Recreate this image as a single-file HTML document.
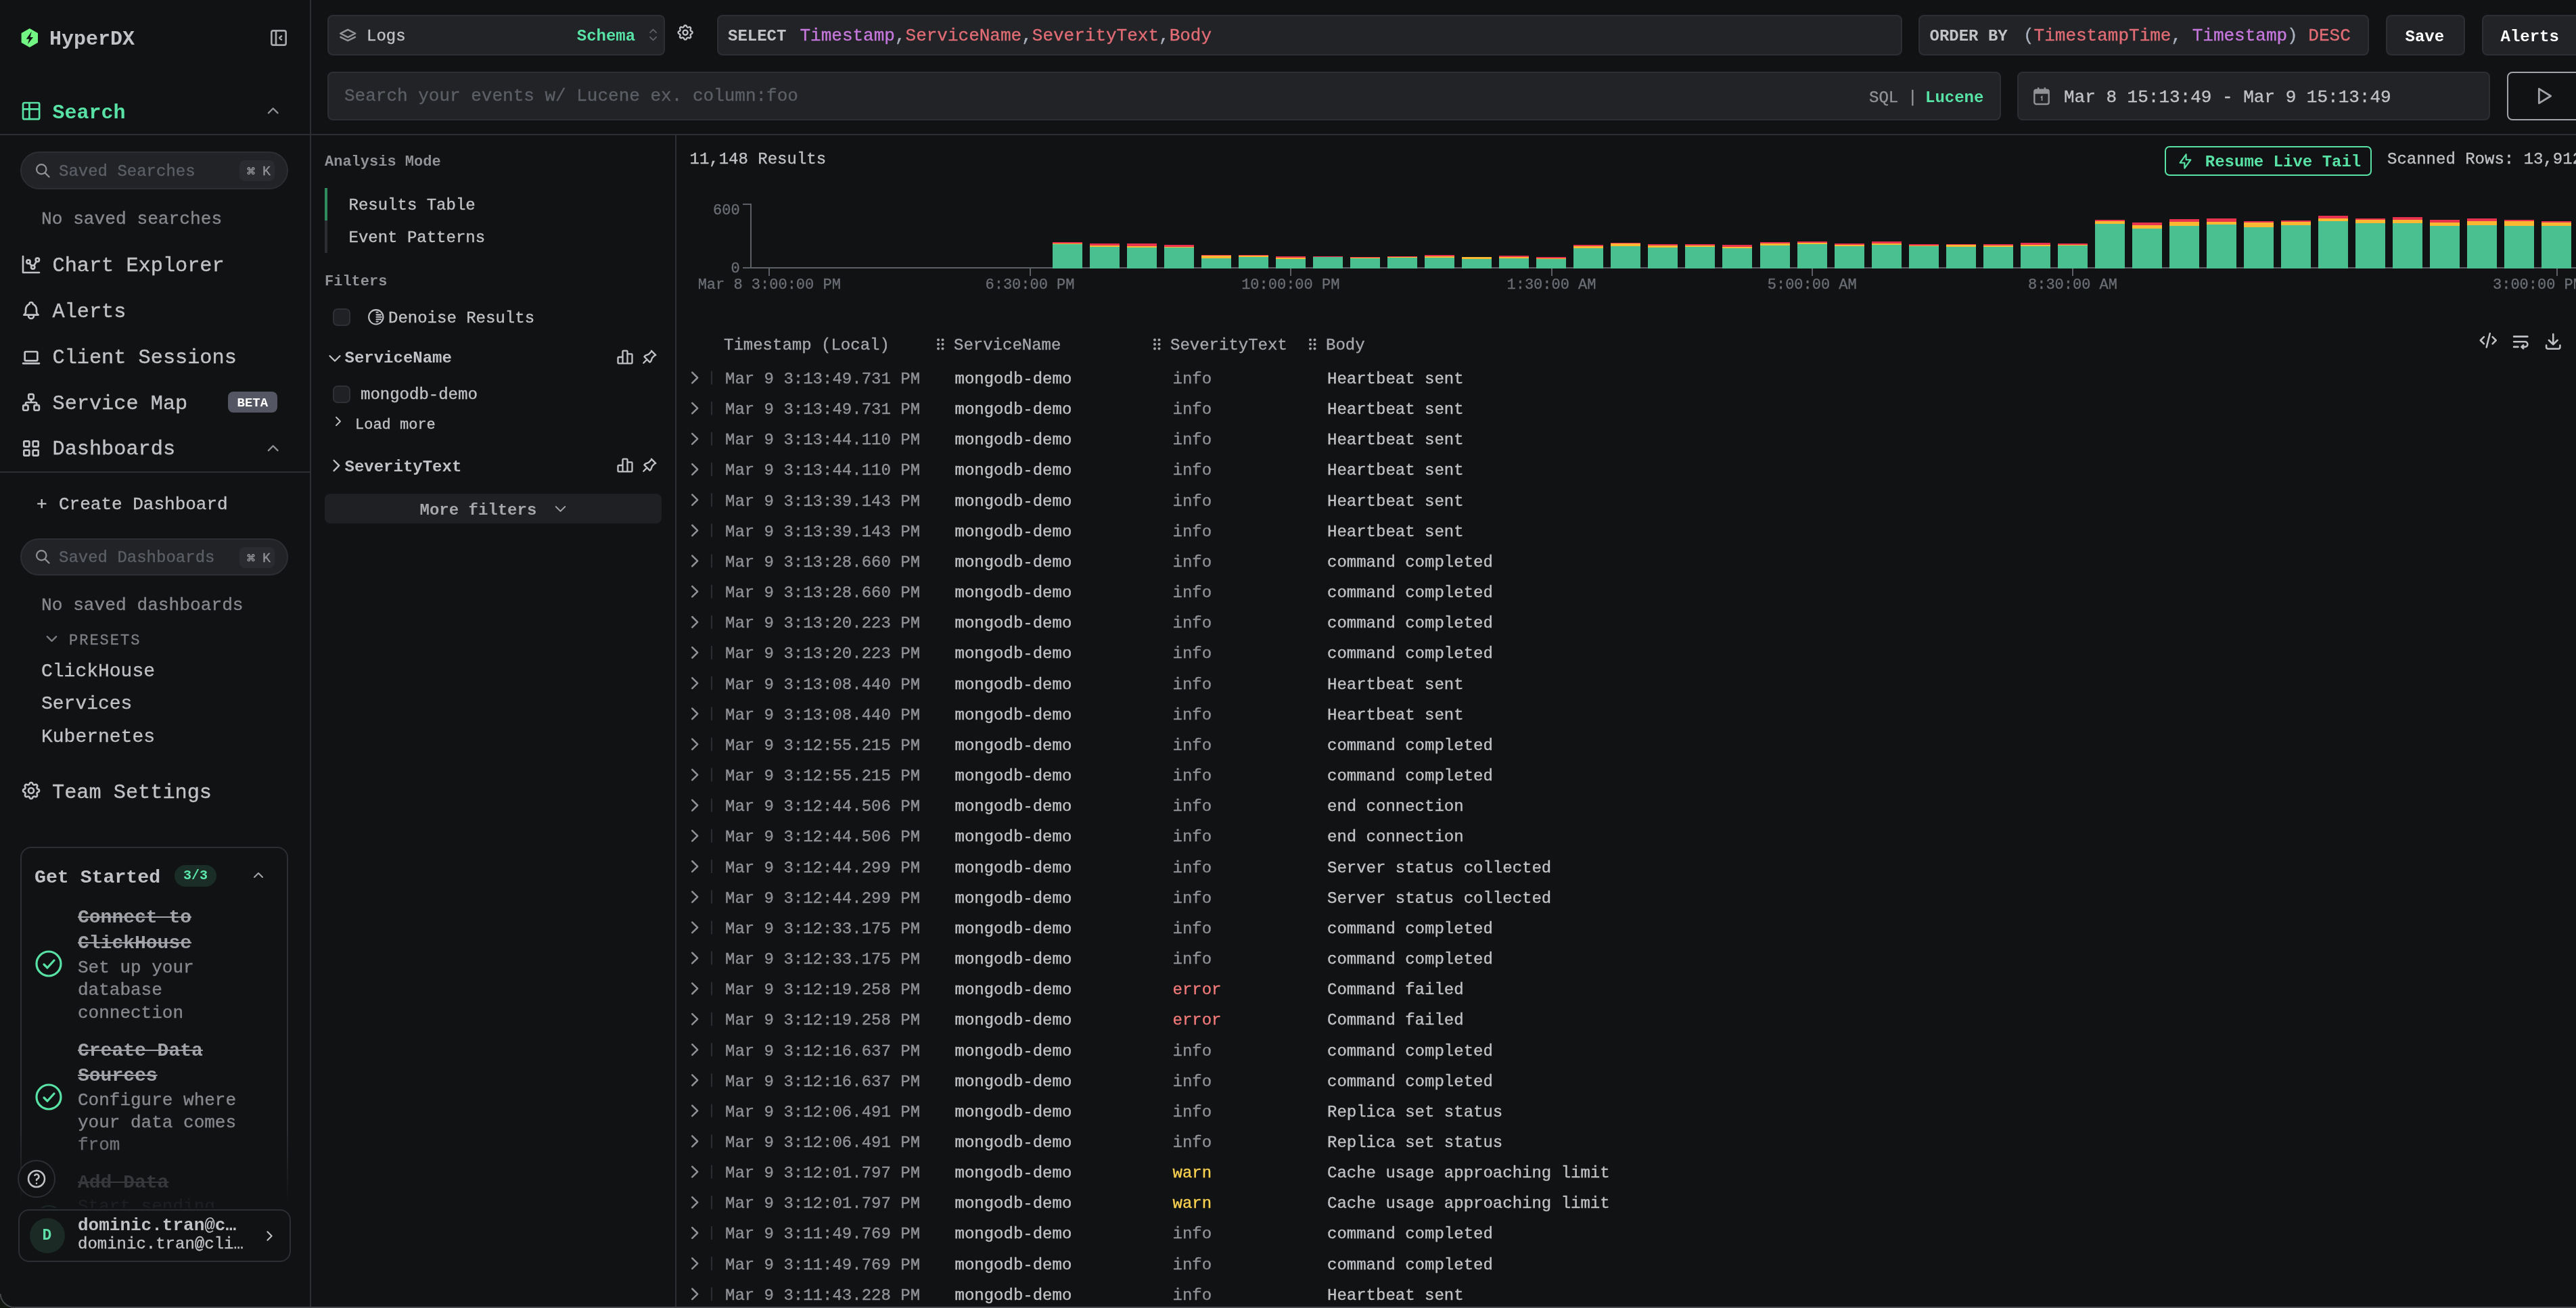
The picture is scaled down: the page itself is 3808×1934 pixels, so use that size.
<!DOCTYPE html><html><head><meta charset="utf-8"><title>HyperDX Search</title><style>
html,body{margin:0;padding:0;background:#111214;width:3808px;height:1934px;overflow:hidden;}
body{position:relative;}
#root{position:absolute;left:0;top:0;width:3808px;height:1934px;will-change:transform;}
.t{position:absolute;white-space:pre;}
.r{position:absolute;}
.i{position:absolute;overflow:visible;}
</style></head><body><div id="root"><div class="r" style="left:0.00px;top:0.00px;width:458.00px;height:1934.00px;background:#111214;border-radius:0px;box-sizing:border-box;"></div>
<div class="r" style="left:458.00px;top:0.00px;width:2.00px;height:1934.00px;background:#2c2e33;border-radius:0px;box-sizing:border-box;"></div>
<div class="r" style="left:0.00px;top:198.00px;width:458.00px;height:2.00px;background:#2c2e33;border-radius:0px;box-sizing:border-box;"></div>
<div class="r" style="left:0.00px;top:697.00px;width:458.00px;height:2.00px;background:#2c2e33;border-radius:0px;box-sizing:border-box;"></div>
<svg class="i" style="left:0px;top:0px" width="100" height="100" viewBox="0 0 100 100"><path d="M43.8 42 L56 49 L56 63 L43.8 70 L31.6 63 L31.6 49 Z" fill="#72f582"/><path d="M46.8 46.6 L38.8 57.8 L43.2 57.8 L41 65.2 L49 55 L44.6 55 Z" fill="#111214"/></svg>
<div class="t" style="left:73.00px;top:43.42px;font-size:30px;line-height:30px;color:#c1c2c5;font-weight:700;font-family:'Liberation Mono', monospace;">HyperDX</div>
<svg class="i" style="left:396.00px;top:40.00px" width="32.00" height="32.00" viewBox="0 0 24 24" fill="none" stroke="#a6a7ab" stroke-width="2" stroke-linecap="round" stroke-linejoin="round"><path d="M4 6a2 2 0 0 1 2 -2h12a2 2 0 0 1 2 2v12a2 2 0 0 1 -2 2h-12a2 2 0 0 1 -2 -2z M9 4v16 M15 10l-2 2l2 2"/></svg>
<svg class="i" style="left:29.90px;top:147.90px" width="32.20" height="32.20" viewBox="0 0 24 24" fill="none" stroke="#58e2a5" stroke-width="2" stroke-linecap="round" stroke-linejoin="round"><path d="M3 4.5a1.5 1.5 0 0 1 1.5 -1.5h15a1.5 1.5 0 0 1 1.5 1.5v15a1.5 1.5 0 0 1 -1.5 1.5h-15a1.5 1.5 0 0 1 -1.5 -1.5z M3 10h18 M10 3v18"/></svg>
<div class="t" style="left:77.50px;top:151.52px;font-size:30px;line-height:30px;color:#58e2a5;font-weight:700;font-family:'Liberation Mono', monospace;">Search</div>
<svg class="i" style="left:390.30px;top:150.30px" width="27.40" height="27.40" viewBox="0 0 24 24" fill="none" stroke="#909296" stroke-width="2" stroke-linecap="round" stroke-linejoin="round"><path d="M6 15l6 -6l6 6"/></svg>
<div class="r" style="left:30.00px;top:224.00px;width:396.00px;height:56.00px;background:#222327;border:2px solid #2c2e33;border-radius:28px;box-sizing:border-box;"></div>
<svg class="i" style="left:51.45px;top:239.55px" width="24.60" height="24.60" viewBox="0 0 24 24" fill="none" stroke="#909296" stroke-width="2.2" stroke-linecap="round" stroke-linejoin="round"><path d="M3 10a7 7 0 1 0 14 0a7 7 0 1 0 -14 0 M21 21l-6 -6"/></svg>
<div class="t" style="left:87.00px;top:241.61px;font-size:24px;line-height:24px;color:#5c5f66;font-weight:400;font-family:'Liberation Mono', monospace;-webkit-text-stroke:0.35px;">Saved Searches</div>
<div class="r" style="left:354.00px;top:237.00px;width:52.00px;height:31.00px;background:#2a2b30;border-radius:8px;box-sizing:border-box;"></div>
<div class="t" style="left:364.00px;top:245.65px;font-size:14px;line-height:14px;color:#909296;font-weight:700;font-family:'Liberation Sans', sans-serif;">⌘</div>
<div class="t" style="left:388.00px;top:244.18px;font-size:20px;line-height:20px;color:#909296;font-weight:400;font-family:'Liberation Mono', monospace;-webkit-text-stroke:0.35px;">K</div>
<div class="t" style="left:61.00px;top:311.23px;font-size:26.2px;line-height:26.2px;color:#86888e;font-weight:400;font-family:'Liberation Mono', monospace;-webkit-text-stroke:0.35px;">No saved searches</div>
<div class="t" style="left:77.50px;top:378.23px;font-size:30.25px;line-height:30.25px;color:#c1c2c5;font-weight:400;font-family:'Liberation Mono', monospace;-webkit-text-stroke:0.35px;">Chart Explorer</div>
<svg class="i" style="left:30.00px;top:375.00px" width="32.00" height="32.00" viewBox="0 0 24 24" fill="none" stroke="#c1c2c5" stroke-width="2" stroke-linecap="round" stroke-linejoin="round"><path d="M3 3v18h18 M7 9a2 2 0 1 0 4 0a2 2 0 1 0 -4 0 M17 7a2 2 0 1 0 4 0a2 2 0 1 0 -4 0 M12 15a2 2 0 1 0 4 0a2 2 0 1 0 -4 0 M10.16 10.62l2.34 2.88 M15.088 13.328l2.837 -4.586"/></svg>
<div class="t" style="left:77.50px;top:445.83px;font-size:30.25px;line-height:30.25px;color:#c1c2c5;font-weight:400;font-family:'Liberation Mono', monospace;-webkit-text-stroke:0.35px;">Alerts</div>
<svg class="i" style="left:30.00px;top:443.20px" width="32.00" height="32.00" viewBox="0 0 24 24" fill="none" stroke="#c1c2c5" stroke-width="2" stroke-linecap="round" stroke-linejoin="round"><path d="M10 5a2 2 0 1 1 4 0a7 7 0 0 1 4 6v3a4 4 0 0 0 2 3h-16a4 4 0 0 0 2 -3v-3a7 7 0 0 1 4 -6 M9 17v1a3 3 0 0 0 6 0v-1"/></svg>
<div class="t" style="left:77.50px;top:513.63px;font-size:30.25px;line-height:30.25px;color:#c1c2c5;font-weight:400;font-family:'Liberation Mono', monospace;-webkit-text-stroke:0.35px;">Client Sessions</div>
<svg class="i" style="left:30.00px;top:511.80px" width="32.00" height="32.00" viewBox="0 0 24 24" fill="none" stroke="#c1c2c5" stroke-width="2" stroke-linecap="round" stroke-linejoin="round"><path d="M3 19l18 0 M5 7a1 1 0 0 1 1 -1h12a1 1 0 0 1 1 1v8a1 1 0 0 1 -1 1h-12a1 1 0 0 1 -1 -1z"/></svg>
<div class="t" style="left:77.50px;top:581.53px;font-size:30.25px;line-height:30.25px;color:#c1c2c5;font-weight:400;font-family:'Liberation Mono', monospace;-webkit-text-stroke:0.35px;">Service Map</div>
<svg class="i" style="left:30.00px;top:579.00px" width="32.00" height="32.00" viewBox="0 0 24 24" fill="none" stroke="#c1c2c5" stroke-width="2" stroke-linecap="round" stroke-linejoin="round"><path d="M10.6 2.9h2.8a1.4 1.4 0 0 1 1.4 1.4v2.85a1.4 1.4 0 0 1 -1.4 1.4h-2.8a1.4 1.4 0 0 1 -1.4 -1.4v-2.85a1.4 1.4 0 0 1 1.4 -1.4z M4.55 15.1h2.7a1.4 1.4 0 0 1 1.4 1.4v2.9a1.4 1.4 0 0 1 -1.4 1.4h-2.7a1.4 1.4 0 0 1 -1.4 -1.4v-2.9a1.4 1.4 0 0 1 1.4 -1.4z M16.75 15.1h2.75a1.4 1.4 0 0 1 1.4 1.4v2.9a1.4 1.4 0 0 1 -1.4 1.4h-2.75a1.4 1.4 0 0 1 -1.4 -1.4v-2.9a1.4 1.4 0 0 1 1.4 -1.4z M12 8.55v3.45 M5.9 15.1v-1.6a1.5 1.5 0 0 1 1.5 -1.5h9.3a1.5 1.5 0 0 1 1.5 1.5v1.6"/></svg>
<div class="t" style="left:77.50px;top:649.23px;font-size:30.25px;line-height:30.25px;color:#c1c2c5;font-weight:400;font-family:'Liberation Mono', monospace;-webkit-text-stroke:0.35px;">Dashboards</div>
<svg class="i" style="left:30.00px;top:647.40px" width="32.00" height="32.00" viewBox="0 0 24 24" fill="none" stroke="#c1c2c5" stroke-width="2" stroke-linecap="round" stroke-linejoin="round"><path d="M4 5a1 1 0 0 1 1 -1h4a1 1 0 0 1 1 1v4a1 1 0 0 1 -1 1h-4a1 1 0 0 1 -1 -1z M14 5a1 1 0 0 1 1 -1h4a1 1 0 0 1 1 1v4a1 1 0 0 1 -1 1h-4a1 1 0 0 1 -1 -1z M4 15a1 1 0 0 1 1 -1h4a1 1 0 0 1 1 1v4a1 1 0 0 1 -1 1h-4a1 1 0 0 1 -1 -1z M14 15a1 1 0 0 1 1 -1h4a1 1 0 0 1 1 1v4a1 1 0 0 1 -1 1h-4a1 1 0 0 1 -1 -1z"/></svg>
<div class="r" style="left:337.00px;top:578.80px;width:72.50px;height:31.70px;background:#545663;border-radius:8px;box-sizing:border-box;"></div>
<div class="t" style="left:350.50px;top:586.74px;font-size:19px;line-height:19px;color:#ffffff;font-weight:700;font-family:'Liberation Mono', monospace;">BETA</div>
<svg class="i" style="left:390.30px;top:649.30px" width="27.40" height="27.40" viewBox="0 0 24 24" fill="none" stroke="#909296" stroke-width="2" stroke-linecap="round" stroke-linejoin="round"><path d="M6 15l6 -6l6 6"/></svg>
<div class="t" style="left:54.00px;top:733.48px;font-size:26px;line-height:26px;color:#c1c2c5;font-weight:400;font-family:'Liberation Mono', monospace;-webkit-text-stroke:0.35px;">+</div>
<div class="t" style="left:87.00px;top:733.48px;font-size:26px;line-height:26px;color:#c1c2c5;font-weight:400;font-family:'Liberation Mono', monospace;-webkit-text-stroke:0.35px;">Create Dashboard</div>
<div class="r" style="left:30.00px;top:795.50px;width:396.00px;height:55.50px;background:#222327;border:2px solid #2c2e33;border-radius:28px;box-sizing:border-box;"></div>
<svg class="i" style="left:51.45px;top:810.70px" width="24.60" height="24.60" viewBox="0 0 24 24" fill="none" stroke="#909296" stroke-width="2.2" stroke-linecap="round" stroke-linejoin="round"><path d="M3 10a7 7 0 1 0 14 0a7 7 0 1 0 -14 0 M21 21l-6 -6"/></svg>
<div class="t" style="left:87.00px;top:813.41px;font-size:24px;line-height:24px;color:#5c5f66;font-weight:400;font-family:'Liberation Mono', monospace;-webkit-text-stroke:0.35px;">Saved Dashboards</div>
<div class="r" style="left:354.00px;top:808.50px;width:52.00px;height:31.00px;background:#2a2b30;border-radius:8px;box-sizing:border-box;"></div>
<div class="t" style="left:364.00px;top:817.65px;font-size:14px;line-height:14px;color:#909296;font-weight:700;font-family:'Liberation Sans', sans-serif;">⌘</div>
<div class="t" style="left:388.00px;top:816.18px;font-size:20px;line-height:20px;color:#909296;font-weight:400;font-family:'Liberation Mono', monospace;-webkit-text-stroke:0.35px;">K</div>
<div class="t" style="left:61.00px;top:882.13px;font-size:26.2px;line-height:26.2px;color:#86888e;font-weight:400;font-family:'Liberation Mono', monospace;-webkit-text-stroke:0.35px;">No saved dashboards</div>
<svg class="i" style="left:62.75px;top:931.30px" width="27.00" height="27.00" viewBox="0 0 24 24" fill="none" stroke="#7c7e84" stroke-width="2" stroke-linecap="round" stroke-linejoin="round"><path d="M6 9l6 6l6 -6"/></svg>
<div class="t" style="left:102.00px;top:936.75px;font-size:22px;line-height:22px;color:#7c7e84;font-weight:400;font-family:'Liberation Mono', monospace;letter-spacing:2px;-webkit-text-stroke:0.35px;">PRESETS</div>
<div class="t" style="left:61.00px;top:978.95px;font-size:28px;line-height:28px;color:#c1c2c5;font-weight:400;font-family:'Liberation Mono', monospace;-webkit-text-stroke:0.35px;">ClickHouse</div>
<div class="t" style="left:61.00px;top:1027.45px;font-size:28px;line-height:28px;color:#c1c2c5;font-weight:400;font-family:'Liberation Mono', monospace;-webkit-text-stroke:0.35px;">Services</div>
<div class="t" style="left:61.00px;top:1076.15px;font-size:28px;line-height:28px;color:#c1c2c5;font-weight:400;font-family:'Liberation Mono', monospace;-webkit-text-stroke:0.35px;">Kubernetes</div>
<svg class="i" style="left:30.00px;top:1153.00px" width="32.00" height="32.00" viewBox="0 0 24 24" fill="none" stroke="#c1c2c5" stroke-width="2" stroke-linecap="round" stroke-linejoin="round"><path d="M10.325 4.317c.426 -1.756 2.924 -1.756 3.35 0a1.724 1.724 0 0 0 2.573 1.066c1.543 -.94 3.31 .826 2.37 2.37a1.724 1.724 0 0 0 1.065 2.572c1.756 .426 1.756 2.924 0 3.35a1.724 1.724 0 0 0 -1.066 2.573c.94 1.543 -.826 3.31 -2.37 2.37a1.724 1.724 0 0 0 -2.572 1.065c-.426 1.756 -2.924 1.756 -3.35 0a1.724 1.724 0 0 0 -2.573 -1.066c-1.543 .94 -3.31 -.826 -2.37 -2.37a1.724 1.724 0 0 0 -1.065 -2.572c-1.756 -.426 -1.756 -2.924 0 -3.35a1.724 1.724 0 0 0 1.066 -2.573c-.94 -1.543 .826 -3.31 2.37 -2.37c1 .608 2.296 .07 2.572 -1.065z M9 12a3 3 0 1 0 6 0a3 3 0 0 0 -6 0"/></svg>
<div class="t" style="left:77.00px;top:1157.43px;font-size:30.25px;line-height:30.25px;color:#c1c2c5;font-weight:400;font-family:'Liberation Mono', monospace;-webkit-text-stroke:0.35px;">Team Settings</div>
<div class="r" style="left:0;top:1240px;width:458px;height:540px;overflow:hidden;-webkit-mask-image:linear-gradient(to bottom,#000 0,#000 430px,rgba(0,0,0,0.25) 520px,rgba(0,0,0,0) 540px);">
<div class="r" style="left:29.9px;top:11.5px;width:396px;height:700px;border:2px solid #2c2e33;border-radius:16px;box-sizing:border-box;"></div>
</div>
<div class="t" style="left:51.00px;top:1283.90px;font-size:28.2px;line-height:28.2px;color:#c1c2c5;font-weight:700;font-family:'Liberation Mono', monospace;">Get Started</div>
<div class="r" style="left:258.00px;top:1279.00px;width:62.00px;height:32.00px;background:#1a2e27;border-radius:16px;box-sizing:border-box;"></div>
<div class="t" style="left:271.00px;top:1285.18px;font-size:20px;line-height:20px;color:#5ce6ab;font-weight:700;font-family:'Liberation Mono', monospace;">3/3</div>
<svg class="i" style="left:370.00px;top:1282.40px" width="24.00" height="24.00" viewBox="0 0 24 24" fill="none" stroke="#a6a7ab" stroke-width="2" stroke-linecap="round" stroke-linejoin="round"><path d="M6 15l6 -6l6 6"/></svg>
<svg class="i" style="left:48.25px;top:1401.00px" width="48.00" height="48.00" viewBox="0 0 24 24" fill="none" stroke="#58e2a5" stroke-width="1.6" stroke-linecap="round" stroke-linejoin="round"><path d="M3 12a9 9 0 1 0 18 0a9 9 0 1 0 -18 0 M8.5 12.5l2.5 2.5l5 -5.5"/></svg>
<svg class="i" style="left:48.25px;top:1598.00px" width="48.00" height="48.00" viewBox="0 0 24 24" fill="none" stroke="#58e2a5" stroke-width="1.6" stroke-linecap="round" stroke-linejoin="round"><path d="M3 12a9 9 0 1 0 18 0a9 9 0 1 0 -18 0 M8.5 12.5l2.5 2.5l5 -5.5"/></svg>
<div class="t" style="left:115.00px;top:1343.15px;font-size:28px;line-height:28px;color:#a2a3a8;font-weight:700;font-family:'Liberation Mono', monospace;text-decoration:line-through;text-decoration-thickness:2px;">Connect to</div>
<div class="t" style="left:115.00px;top:1380.55px;font-size:28px;line-height:28px;color:#a2a3a8;font-weight:700;font-family:'Liberation Mono', monospace;text-decoration:line-through;text-decoration-thickness:2px;">ClickHouse</div>
<div class="t" style="left:115.00px;top:1417.78px;font-size:26px;line-height:26px;color:#86888e;font-weight:400;font-family:'Liberation Mono', monospace;-webkit-text-stroke:0.35px;">Set up your</div>
<div class="t" style="left:115.00px;top:1451.18px;font-size:26px;line-height:26px;color:#86888e;font-weight:400;font-family:'Liberation Mono', monospace;-webkit-text-stroke:0.35px;">database</div>
<div class="t" style="left:115.00px;top:1484.68px;font-size:26px;line-height:26px;color:#86888e;font-weight:400;font-family:'Liberation Mono', monospace;-webkit-text-stroke:0.35px;">connection</div>
<div class="t" style="left:115.00px;top:1540.15px;font-size:28px;line-height:28px;color:#a2a3a8;font-weight:700;font-family:'Liberation Mono', monospace;text-decoration:line-through;text-decoration-thickness:2px;">Create Data</div>
<div class="t" style="left:115.00px;top:1576.75px;font-size:28px;line-height:28px;color:#a2a3a8;font-weight:700;font-family:'Liberation Mono', monospace;text-decoration:line-through;text-decoration-thickness:2px;">Sources</div>
<div class="t" style="left:115.00px;top:1614.48px;font-size:26px;line-height:26px;color:#86888e;font-weight:400;font-family:'Liberation Mono', monospace;-webkit-text-stroke:0.35px;">Configure where</div>
<div class="t" style="left:115.00px;top:1647.08px;font-size:26px;line-height:26px;color:#86888e;font-weight:400;font-family:'Liberation Mono', monospace;-webkit-text-stroke:0.35px;">your data comes</div>
<div class="t" style="left:115.00px;top:1680.28px;font-size:26px;line-height:26px;color:#6f7177;font-weight:400;font-family:'Liberation Mono', monospace;-webkit-text-stroke:0.35px;">from</div>
<div class="t" style="left:115.00px;top:1735.45px;font-size:28px;line-height:28px;color:#37383c;font-weight:700;font-family:'Liberation Mono', monospace;text-decoration:line-through;text-decoration-thickness:2px;">Add Data</div>
<div class="r" style="left:0;top:1760px;width:458px;height:26px;overflow:hidden;">
<div class="t" style="left:115.00px;top:11.08px;font-size:26px;line-height:26px;color:#1e1f23;font-weight:400;font-family:'Liberation Mono', monospace;-webkit-text-stroke:0.35px;">Start sending</div>
<svg class="i" style="left:0;top:0" width="120" height="30" viewBox="0 1760 120 30"><circle cx="72.25" cy="1802" r="19" fill="none" stroke="#1c2723" stroke-width="2.2"/></svg>
</div>
<div class="r" style="left:25.90px;top:1714.90px;width:56.00px;height:56.00px;background:#111214;border:2px solid #2c2e33;border-radius:28px;box-sizing:border-box;"></div>
<svg class="i" style="left:37.90px;top:1726.90px" width="32.00" height="32.00" viewBox="0 0 24 24" fill="none" stroke="#c1c2c5" stroke-width="1.9" stroke-linecap="round" stroke-linejoin="round"><path d="M3 12a9 9 0 1 0 18 0a9 9 0 1 0 -18 0 M12 17v.01 M12 13.5a1.5 1.5 0 0 1 1 -1.5a2.6 2.6 0 1 0 -3 -4"/></svg>
<div class="r" style="left:26.50px;top:1787.50px;width:403.00px;height:78.00px;background:#111214;border:2px solid #2c2e33;border-radius:16px;box-sizing:border-box;"></div>
<div class="r" style="left:44.30px;top:1800.70px;width:52.00px;height:52.00px;background:#1b2a25;border-radius:26px;box-sizing:border-box;"></div>
<div class="t" style="left:62.50px;top:1815.68px;font-size:23px;line-height:23px;color:#5ee0a8;font-weight:700;font-family:'Liberation Mono', monospace;">D</div>
<div class="t" style="left:115.00px;top:1798.78px;font-size:26px;line-height:26px;color:#c1c2c5;font-weight:700;font-family:'Liberation Mono', monospace;">dominic.tran@c…</div>
<div class="t" style="left:115.00px;top:1828.31px;font-size:24px;line-height:24px;color:#c1c2c5;font-weight:400;font-family:'Liberation Mono', monospace;-webkit-text-stroke:0.35px;">dominic.tran@cli…</div>
<svg class="i" style="left:385.60px;top:1814.60px" width="25.00" height="25.00" viewBox="0 0 24 24" fill="none" stroke="#c1c2c5" stroke-width="2" stroke-linecap="round" stroke-linejoin="round"><path d="M9 6l6 6l-6 6"/></svg>
<div class="r" style="left:460.00px;top:0.00px;width:3348.00px;height:198.00px;background:#111214;border-radius:0px;box-sizing:border-box;"></div>
<div class="r" style="left:460.00px;top:198.00px;width:3348.00px;height:2.00px;background:#2c2e33;border-radius:0px;box-sizing:border-box;"></div>
<div class="r" style="left:484.00px;top:22.00px;width:499.00px;height:59.50px;background:#222327;border:2px solid #2c2e33;border-radius:8px;box-sizing:border-box;"></div>
<svg class="i" style="left:490px;top:30px" width="50" height="40" viewBox="490 30 50 40"><path d="M514.2 43.8 L503.2 49.5 L514.2 55.1 L525.2 49.5 Z M503.5 54.9 L514.2 60.1 L524.9 54.9" fill="none" stroke="#909296" stroke-width="2.5" stroke-linejoin="round" stroke-linecap="round"/></svg>
<div class="t" style="left:542.00px;top:42.36px;font-size:24px;line-height:24px;color:#c1c2c5;font-weight:400;font-family:'Liberation Mono', monospace;-webkit-text-stroke:0.35px;">Logs</div>
<div class="t" style="left:581.00px;top:42.36px;font-size:24px;line-height:24px;color:#c1c2c5;font-weight:400;font-family:'Liberation Mono', monospace;-webkit-text-stroke:0.35px;"></div>
<div class="t" style="left:852.75px;top:42.36px;font-size:24px;line-height:24px;color:#58e2a5;font-weight:700;font-family:'Liberation Mono', monospace;">Schema</div>
<svg class="i" style="left:952.10px;top:38.10px" width="27.00" height="27.00" viewBox="0 0 24 24" fill="none" stroke="#5c5f66" stroke-width="1.7" stroke-linecap="round" stroke-linejoin="round"><path d="M8 9l4 -4l4 4 M16 15l-4 4l-4 -4"/></svg>
<svg class="i" style="left:998.50px;top:33.50px" width="28.20" height="28.20" viewBox="0 0 24 24" fill="none" stroke="#c1c2c5" stroke-width="2" stroke-linecap="round" stroke-linejoin="round"><path d="M10.325 4.317c.426 -1.756 2.924 -1.756 3.35 0a1.724 1.724 0 0 0 2.573 1.066c1.543 -.94 3.31 .826 2.37 2.37a1.724 1.724 0 0 0 1.065 2.572c1.756 .426 1.756 2.924 0 3.35a1.724 1.724 0 0 0 -1.066 2.573c.94 1.543 -.826 3.31 -2.37 2.37a1.724 1.724 0 0 0 -2.572 1.065c-.426 1.756 -2.924 1.756 -3.35 0a1.724 1.724 0 0 0 -2.573 -1.066c-1.543 .94 -3.31 -.826 -2.37 -2.37a1.724 1.724 0 0 0 -1.065 -2.572c-1.756 -.426 -1.756 -2.924 0 -3.35a1.724 1.724 0 0 0 1.066 -2.573c-.94 -1.543 .826 -3.31 2.37 -2.37c1 .608 2.296 .07 2.572 -1.065z M9 12a3 3 0 1 0 6 0a3 3 0 0 0 -6 0"/></svg>
<div class="r" style="left:1059.50px;top:22.00px;width:1752.50px;height:59.50px;background:#222327;border:2px solid #2c2e33;border-radius:8px;box-sizing:border-box;"></div>
<div class="t" style="left:1076.00px;top:41.61px;font-size:24px;line-height:24px;color:#c1c2c5;font-weight:700;font-family:'Liberation Mono', monospace;">SELECT</div>
<div class="t" style="left:1182.5px;top:40.08px;font-size:26px;line-height:26px;font-family:'Liberation Mono', monospace;white-space:pre;-webkit-text-stroke:0.35px"><span style="color:#c678dd">Timestamp</span><span style="color:#abb2bf">,</span><span style="color:#e06c75">ServiceName</span><span style="color:#abb2bf">,</span><span style="color:#e06c75">SeverityText</span><span style="color:#abb2bf">,</span><span style="color:#e06c75">Body</span></div>
<div class="r" style="left:2836.00px;top:22.00px;width:666.00px;height:59.50px;background:#222327;border:2px solid #2c2e33;border-radius:8px;box-sizing:border-box;"></div>
<div class="t" style="left:2852.50px;top:41.61px;font-size:24px;line-height:24px;color:#c1c2c5;font-weight:700;font-family:'Liberation Mono', monospace;">ORDER BY</div>
<div class="t" style="left:2991px;top:40.08px;font-size:26px;line-height:26px;font-family:'Liberation Mono', monospace;white-space:pre;-webkit-text-stroke:0.35px"><span style="color:#abb2bf">(</span><span style="color:#e06c75">TimestampTime</span><span style="color:#abb2bf">, </span><span style="color:#c678dd">Timestamp</span><span style="color:#abb2bf">) </span><span style="color:#e06c75">DESC</span></div>
<div class="r" style="left:3526.50px;top:22.00px;width:117.00px;height:59.50px;background:#222327;border:2px solid #2c2e33;border-radius:8px;box-sizing:border-box;"></div>
<div class="t" style="left:3555.50px;top:42.61px;font-size:24px;line-height:24px;color:#ffffff;font-weight:700;font-family:'Liberation Mono', monospace;">Save</div>
<div class="r" style="left:3668.50px;top:22.00px;width:191.50px;height:59.50px;background:#222327;border:2px solid #2c2e33;border-radius:8px;box-sizing:border-box;"></div>
<div class="t" style="left:3696.50px;top:42.61px;font-size:24px;line-height:24px;color:#ffffff;font-weight:700;font-family:'Liberation Mono', monospace;">Alerts</div>
<div class="r" style="left:484.00px;top:106.00px;width:2473.50px;height:71.50px;background:#222327;border:2px solid #2c2e33;border-radius:8px;box-sizing:border-box;"></div>
<div class="t" style="left:509.00px;top:129.33px;font-size:26px;line-height:26px;color:#5c5f66;font-weight:400;font-family:'Liberation Mono', monospace;-webkit-text-stroke:0.35px;">Search your events w/ Lucene ex. column:foo</div>
<div class="t" style="left:2763.00px;top:132.86px;font-size:24px;line-height:24px;color:#909296;font-weight:400;font-family:'Liberation Mono', monospace;-webkit-text-stroke:0.35px;">SQL</div>
<div class="t" style="left:2820.00px;top:132.86px;font-size:24px;line-height:24px;color:#909296;font-weight:400;font-family:'Liberation Mono', monospace;-webkit-text-stroke:0.35px;">|</div>
<div class="t" style="left:2846.00px;top:132.86px;font-size:24px;line-height:24px;color:#58e2a5;font-weight:700;font-family:'Liberation Mono', monospace;">Lucene</div>
<div class="r" style="left:2982.00px;top:106.00px;width:699.00px;height:71.50px;background:#222327;border:2px solid #2c2e33;border-radius:8px;box-sizing:border-box;"></div>
<svg class="i" style="left:3005px;top:127.6px" width="26" height="27.9" viewBox="0 0 28 30"><rect x="2.5" y="5" width="23" height="23" rx="3" fill="none" stroke="#909296" stroke-width="2.6"/><rect x="2.5" y="5" width="23" height="6.5" fill="#909296"/><rect x="7.5" y="1.5" width="2.6" height="6" fill="#909296"/><rect x="17.9" y="1.5" width="2.6" height="6" fill="#909296"/><path d="M12.8 17.5 L14.6 16 L14.6 22.5" fill="none" stroke="#909296" stroke-width="1.8"/></svg>
<div class="t" style="left:3051.00px;top:131.33px;font-size:26px;line-height:26px;color:#c1c2c5;font-weight:400;font-family:'Liberation Mono', monospace;-webkit-text-stroke:0.35px;">Mar 8 15:13:49 - Mar 9 15:13:49</div>
<div class="r" style="left:3705.50px;top:106.00px;width:154.50px;height:71.50px;background:#111214;border:2px solid #a2a3a8;border-radius:8px;box-sizing:border-box;"></div>
<svg class="i" style="left:3743.60px;top:125.90px" width="32.00" height="32.00" viewBox="0 0 24 24" fill="none" stroke="#a2a3a8" stroke-width="2.1" stroke-linecap="round" stroke-linejoin="round"><path d="M7 4v16l13 -8z"/></svg>
<div class="r" style="left:460.00px;top:200.00px;width:538.00px;height:1734.00px;background:#111214;border-radius:0px;box-sizing:border-box;"></div>
<div class="r" style="left:998.00px;top:200.00px;width:2.00px;height:1734.00px;background:#2c2e33;border-radius:0px;box-sizing:border-box;"></div>
<div class="t" style="left:480.00px;top:228.65px;font-size:22px;line-height:22px;color:#909296;font-weight:700;font-family:'Liberation Mono', monospace;">Analysis Mode</div>
<div class="r" style="left:480.00px;top:278.00px;width:4.00px;height:48.25px;background:#2f8a5e;border-radius:0px;box-sizing:border-box;"></div>
<div class="r" style="left:480.00px;top:326.25px;width:4.00px;height:47.50px;background:#2c2e33;border-radius:0px;box-sizing:border-box;"></div>
<div class="t" style="left:515.50px;top:291.61px;font-size:24px;line-height:24px;color:#c1c2c5;font-weight:400;font-family:'Liberation Mono', monospace;-webkit-text-stroke:0.35px;">Results Table</div>
<div class="t" style="left:515.50px;top:339.61px;font-size:24px;line-height:24px;color:#c1c2c5;font-weight:400;font-family:'Liberation Mono', monospace;-webkit-text-stroke:0.35px;">Event Patterns</div>
<div class="t" style="left:480.00px;top:406.15px;font-size:22px;line-height:22px;color:#909296;font-weight:700;font-family:'Liberation Mono', monospace;">Filters</div>
<div class="r" style="left:491.80px;top:456.00px;width:26.00px;height:26.00px;background:#202125;border:2px solid #2e3035;border-radius:7px;box-sizing:border-box;"></div>
<svg class="i" style="left:541.95px;top:455.20px" width="27.60" height="27.60" viewBox="0 0 24 24" fill="none" stroke="#c1c2c5" stroke-width="1.8" stroke-linecap="round" stroke-linejoin="round"><path d="M2.7 12a9.3 9.3 0 1 0 18.6 0a9.3 9.3 0 1 0 -18.6 0 M12.6 5.9h1.9 M12.6 9h5.6 M12.6 12h6.4 M12.6 15h5.6 M12.6 17.9h1.9"/></svg>
<div class="t" style="left:574.00px;top:458.61px;font-size:24px;line-height:24px;color:#c1c2c5;font-weight:400;font-family:'Liberation Mono', monospace;-webkit-text-stroke:0.35px;">Denoise Results</div>
<svg class="i" style="left:479.75px;top:515.00px" width="30.00" height="30.00" viewBox="0 0 24 24" fill="none" stroke="#c1c2c5" stroke-width="1.8" stroke-linecap="round" stroke-linejoin="round"><path d="M6 9l6 6l6 -6"/></svg>
<div class="t" style="left:509.50px;top:517.86px;font-size:24px;line-height:24px;color:#c1c2c5;font-weight:700;font-family:'Liberation Mono', monospace;">ServiceName</div>
<svg class="i" style="left:909.50px;top:514.20px" width="28.00" height="28.00" viewBox="0 0 24 24" fill="none" stroke="#c1c2c5" stroke-width="2" stroke-linecap="round" stroke-linejoin="round"><path d="M3 13a1 1 0 0 1 1 -1h4a1 1 0 0 1 1 1v6a1 1 0 0 1 -1 1h-4a1 1 0 0 1 -1 -1z M15 9a1 1 0 0 1 1 -1h4a1 1 0 0 1 1 1v10a1 1 0 0 1 -1 1h-4a1 1 0 0 1 -1 -1z M9 5a1 1 0 0 1 1 -1h4a1 1 0 0 1 1 1v14a1 1 0 0 1 -1 1h-4a1 1 0 0 1 -1 -1z"/></svg>
<svg class="i" style="left:945.50px;top:514.20px" width="28.00" height="28.00" viewBox="0 0 24 24" fill="none" stroke="#c1c2c5" stroke-width="2" stroke-linecap="round" stroke-linejoin="round"><path d="M15 4.5l-4 4l-4 1.5l-1.5 1.5l7 7l1.5 -1.5l1.5 -4l4 -4 M9 15l-4.5 4.5 M14.5 4l5.5 5.5"/></svg>
<div class="r" style="left:491.80px;top:570.00px;width:26.00px;height:26.00px;background:#202125;border:2px solid #2e3035;border-radius:7px;box-sizing:border-box;"></div>
<div class="t" style="left:533.00px;top:572.11px;font-size:24px;line-height:24px;color:#c1c2c5;font-weight:400;font-family:'Liberation Mono', monospace;-webkit-text-stroke:0.35px;">mongodb-demo</div>
<svg class="i" style="left:487.75px;top:611.00px" width="24.00" height="24.00" viewBox="0 0 24 24" fill="none" stroke="#c1c2c5" stroke-width="1.8" stroke-linecap="round" stroke-linejoin="round"><path d="M9 6l6 6l-6 6"/></svg>
<div class="t" style="left:525.00px;top:618.15px;font-size:22px;line-height:22px;color:#c1c2c5;font-weight:400;font-family:'Liberation Mono', monospace;-webkit-text-stroke:0.35px;">Load more</div>
<svg class="i" style="left:481.70px;top:673.10px" width="30.80" height="30.80" viewBox="0 0 24 24" fill="none" stroke="#c1c2c5" stroke-width="1.8" stroke-linecap="round" stroke-linejoin="round"><path d="M9 6l6 6l-6 6"/></svg>
<div class="t" style="left:509.50px;top:678.61px;font-size:24px;line-height:24px;color:#c1c2c5;font-weight:700;font-family:'Liberation Mono', monospace;">SeverityText</div>
<svg class="i" style="left:909.50px;top:674.20px" width="28.00" height="28.00" viewBox="0 0 24 24" fill="none" stroke="#c1c2c5" stroke-width="2" stroke-linecap="round" stroke-linejoin="round"><path d="M3 13a1 1 0 0 1 1 -1h4a1 1 0 0 1 1 1v6a1 1 0 0 1 -1 1h-4a1 1 0 0 1 -1 -1z M15 9a1 1 0 0 1 1 -1h4a1 1 0 0 1 1 1v10a1 1 0 0 1 -1 1h-4a1 1 0 0 1 -1 -1z M9 5a1 1 0 0 1 1 -1h4a1 1 0 0 1 1 1v14a1 1 0 0 1 -1 1h-4a1 1 0 0 1 -1 -1z"/></svg>
<svg class="i" style="left:945.50px;top:674.20px" width="28.00" height="28.00" viewBox="0 0 24 24" fill="none" stroke="#c1c2c5" stroke-width="2" stroke-linecap="round" stroke-linejoin="round"><path d="M15 4.5l-4 4l-4 1.5l-1.5 1.5l7 7l1.5 -1.5l1.5 -4l4 -4 M9 15l-4.5 4.5 M14.5 4l5.5 5.5"/></svg>
<div class="r" style="left:480.00px;top:730.00px;width:498.00px;height:44.00px;background:#1f2023;border-radius:8px;box-sizing:border-box;"></div>
<div class="t" style="left:620.50px;top:742.86px;font-size:24px;line-height:24px;color:#a6a7ab;font-weight:700;font-family:'Liberation Mono', monospace;">More filters</div>
<svg class="i" style="left:814.50px;top:738.75px" width="27.00" height="27.00" viewBox="0 0 24 24" fill="none" stroke="#a6a7ab" stroke-width="1.8" stroke-linecap="round" stroke-linejoin="round"><path d="M6 9l6 6l6 -6"/></svg>
<div class="r" style="left:1000.00px;top:200.00px;width:2808.00px;height:1734.00px;background:#111214;border-radius:0px;box-sizing:border-box;"></div>
<div class="t" style="left:1019.50px;top:224.11px;font-size:24px;line-height:24px;color:#c1c2c5;font-weight:400;font-family:'Liberation Mono', monospace;-webkit-text-stroke:0.35px;">11,148 Results</div>
<div class="r" style="left:3200.25px;top:216.00px;width:305.50px;height:43.50px;background:transparent;border:2px solid #58e2a5;border-radius:7px;box-sizing:border-box;"></div>
<svg class="i" style="left:3216.50px;top:224.50px" width="27.00" height="27.00" viewBox="0 0 24 24" fill="none" stroke="#58e2a5" stroke-width="1.9" stroke-linecap="round" stroke-linejoin="round"><path d="M13 3v7h6l-8 11v-7h-6l8 -11"/></svg>
<div class="t" style="left:3259.80px;top:228.36px;font-size:24px;line-height:24px;color:#58e2a5;font-weight:700;font-family:'Liberation Mono', monospace;">Resume Live Tail</div>
<div class="t" style="left:3529.00px;top:224.11px;font-size:24px;line-height:24px;color:#c1c2c5;font-weight:400;font-family:'Liberation Mono', monospace;-webkit-text-stroke:0.35px;">Scanned Rows: 13,912</div>
<div class="r" style="left:1108.75px;top:301.00px;width:2.00px;height:95.50px;background:#5c5f66;border-radius:0px;box-sizing:border-box;"></div>
<div class="r" style="left:1098.00px;top:301.00px;width:12.75px;height:2.00px;background:#5c5f66;border-radius:0px;box-sizing:border-box;"></div>
<div class="r" style="left:1098.00px;top:394.50px;width:2710.00px;height:2.00px;background:#5c5f66;border-radius:0px;box-sizing:border-box;"></div>
<div class="t" style="left:1054.00px;top:300.65px;font-size:22px;line-height:22px;color:#6b6e75;font-weight:400;font-family:'Liberation Mono', monospace;-webkit-text-stroke:0.35px;">600</div>
<div class="t" style="left:1080.50px;top:386.65px;font-size:22px;line-height:22px;color:#6b6e75;font-weight:400;font-family:'Liberation Mono', monospace;-webkit-text-stroke:0.35px;">0</div>
<div class="r" style="left:1136.25px;top:396.50px;width:2.00px;height:11.00px;background:#5c5f66;border-radius:0px;box-sizing:border-box;"></div>
<div class="t" style="left:1031.65px;top:410.65px;font-size:22px;line-height:22px;color:#6b6e75;font-weight:400;font-family:'Liberation Mono', monospace;-webkit-text-stroke:0.35px;">Mar 8 3:00:00 PM</div>
<div class="r" style="left:1521.50px;top:396.50px;width:2.00px;height:11.00px;background:#5c5f66;border-radius:0px;box-sizing:border-box;"></div>
<div class="t" style="left:1456.50px;top:410.65px;font-size:22px;line-height:22px;color:#6b6e75;font-weight:400;font-family:'Liberation Mono', monospace;-webkit-text-stroke:0.35px;">6:30:00 PM</div>
<div class="r" style="left:1906.75px;top:396.50px;width:2.00px;height:11.00px;background:#5c5f66;border-radius:0px;box-sizing:border-box;"></div>
<div class="t" style="left:1835.15px;top:410.65px;font-size:22px;line-height:22px;color:#6b6e75;font-weight:400;font-family:'Liberation Mono', monospace;-webkit-text-stroke:0.35px;">10:00:00 PM</div>
<div class="r" style="left:2292.50px;top:396.50px;width:2.00px;height:11.00px;background:#5c5f66;border-radius:0px;box-sizing:border-box;"></div>
<div class="t" style="left:2227.50px;top:410.65px;font-size:22px;line-height:22px;color:#6b6e75;font-weight:400;font-family:'Liberation Mono', monospace;-webkit-text-stroke:0.35px;">1:30:00 AM</div>
<div class="r" style="left:2677.75px;top:396.50px;width:2.00px;height:11.00px;background:#5c5f66;border-radius:0px;box-sizing:border-box;"></div>
<div class="t" style="left:2612.75px;top:410.65px;font-size:22px;line-height:22px;color:#6b6e75;font-weight:400;font-family:'Liberation Mono', monospace;-webkit-text-stroke:0.35px;">5:00:00 AM</div>
<div class="r" style="left:3063.00px;top:396.50px;width:2.00px;height:11.00px;background:#5c5f66;border-radius:0px;box-sizing:border-box;"></div>
<div class="t" style="left:2998.00px;top:410.65px;font-size:22px;line-height:22px;color:#6b6e75;font-weight:400;font-family:'Liberation Mono', monospace;-webkit-text-stroke:0.35px;">8:30:00 AM</div>
<div class="r" style="left:3778.50px;top:396.50px;width:2.00px;height:11.00px;background:#5c5f66;border-radius:0px;box-sizing:border-box;"></div>
<div class="t" style="left:3685.00px;top:410.65px;font-size:22px;line-height:22px;color:#6b6e75;font-weight:400;font-family:'Liberation Mono', monospace;-webkit-text-stroke:0.35px;">3:00:00 PM</div>
<svg class="i" style="left:0;top:0" width="3808" height="420" viewBox="0 0 3808 420" shape-rendering="crispEdges"><rect x="1555.75" y="358.00" width="44" height="2.00" fill="#e8334f"/><rect x="1555.75" y="360.00" width="44" height="0.75" fill="#fbb833"/><rect x="1555.75" y="360.75" width="44" height="35.75" fill="#4abf90"/><rect x="1610.79" y="359.75" width="44" height="3.00" fill="#e8334f"/><rect x="1610.79" y="362.75" width="44" height="2.50" fill="#fbb833"/><rect x="1610.79" y="365.25" width="44" height="31.25" fill="#4abf90"/><rect x="1665.83" y="359.75" width="44" height="4.00" fill="#e8334f"/><rect x="1665.83" y="363.75" width="44" height="2.50" fill="#fbb833"/><rect x="1665.83" y="366.25" width="44" height="30.25" fill="#4abf90"/><rect x="1720.87" y="362.00" width="44" height="2.50" fill="#e8334f"/><rect x="1720.87" y="364.50" width="44" height="1.00" fill="#fbb833"/><rect x="1720.87" y="365.50" width="44" height="31.00" fill="#4abf90"/><rect x="1775.91" y="377.00" width="44" height="1.25" fill="#e8334f"/><rect x="1775.91" y="378.25" width="44" height="3.50" fill="#fbb833"/><rect x="1775.91" y="381.75" width="44" height="14.75" fill="#4abf90"/><rect x="1830.95" y="376.75" width="44" height="1.50" fill="#e8334f"/><rect x="1830.95" y="378.25" width="44" height="1.75" fill="#fbb833"/><rect x="1830.95" y="380.00" width="44" height="16.50" fill="#4abf90"/><rect x="1885.99" y="379.00" width="44" height="2.00" fill="#e8334f"/><rect x="1885.99" y="381.00" width="44" height="1.50" fill="#fbb833"/><rect x="1885.99" y="382.50" width="44" height="14.00" fill="#4abf90"/><rect x="1941.03" y="378.50" width="44" height="1.00" fill="#e8334f"/><rect x="1941.03" y="379.50" width="44" height="0.50" fill="#fbb833"/><rect x="1941.03" y="380.00" width="44" height="16.50" fill="#4abf90"/><rect x="1996.07" y="379.50" width="44" height="1.00" fill="#e8334f"/><rect x="1996.07" y="380.50" width="44" height="1.00" fill="#fbb833"/><rect x="1996.07" y="381.50" width="44" height="15.00" fill="#4abf90"/><rect x="2051.11" y="378.50" width="44" height="1.00" fill="#e8334f"/><rect x="2051.11" y="379.50" width="44" height="1.00" fill="#fbb833"/><rect x="2051.11" y="380.50" width="44" height="16.00" fill="#4abf90"/><rect x="2106.15" y="377.00" width="44" height="2.00" fill="#e8334f"/><rect x="2106.15" y="379.00" width="44" height="1.75" fill="#fbb833"/><rect x="2106.15" y="380.75" width="44" height="15.75" fill="#4abf90"/><rect x="2161.19" y="380.00" width="44" height="0.00" fill="#e8334f"/><rect x="2161.19" y="380.00" width="44" height="2.50" fill="#fbb833"/><rect x="2161.19" y="382.50" width="44" height="14.00" fill="#4abf90"/><rect x="2216.23" y="378.00" width="44" height="2.00" fill="#e8334f"/><rect x="2216.23" y="380.00" width="44" height="1.75" fill="#fbb833"/><rect x="2216.23" y="381.75" width="44" height="14.75" fill="#4abf90"/><rect x="2271.27" y="380.00" width="44" height="2.00" fill="#e8334f"/><rect x="2271.27" y="382.00" width="44" height="1.00" fill="#fbb833"/><rect x="2271.27" y="383.00" width="44" height="13.50" fill="#4abf90"/><rect x="2326.31" y="362.00" width="44" height="1.75" fill="#e8334f"/><rect x="2326.31" y="363.75" width="44" height="3.25" fill="#fbb833"/><rect x="2326.31" y="367.00" width="44" height="29.50" fill="#4abf90"/><rect x="2381.35" y="359.00" width="44" height="1.00" fill="#e8334f"/><rect x="2381.35" y="360.00" width="44" height="4.00" fill="#fbb833"/><rect x="2381.35" y="364.00" width="44" height="32.50" fill="#4abf90"/><rect x="2436.39" y="361.00" width="44" height="2.00" fill="#e8334f"/><rect x="2436.39" y="363.00" width="44" height="2.50" fill="#fbb833"/><rect x="2436.39" y="365.50" width="44" height="31.00" fill="#4abf90"/><rect x="2491.43" y="361.25" width="44" height="2.00" fill="#e8334f"/><rect x="2491.43" y="363.25" width="44" height="1.75" fill="#fbb833"/><rect x="2491.43" y="365.00" width="44" height="31.50" fill="#4abf90"/><rect x="2546.47" y="362.00" width="44" height="3.00" fill="#e8334f"/><rect x="2546.47" y="365.00" width="44" height="2.00" fill="#fbb833"/><rect x="2546.47" y="367.00" width="44" height="29.50" fill="#4abf90"/><rect x="2601.51" y="358.00" width="44" height="2.00" fill="#e8334f"/><rect x="2601.51" y="360.00" width="44" height="2.75" fill="#fbb833"/><rect x="2601.51" y="362.75" width="44" height="33.75" fill="#4abf90"/><rect x="2656.55" y="357.00" width="44" height="2.25" fill="#e8334f"/><rect x="2656.55" y="359.25" width="44" height="2.00" fill="#fbb833"/><rect x="2656.55" y="361.25" width="44" height="35.25" fill="#4abf90"/><rect x="2711.59" y="360.25" width="44" height="2.00" fill="#e8334f"/><rect x="2711.59" y="362.25" width="44" height="1.75" fill="#fbb833"/><rect x="2711.59" y="364.00" width="44" height="32.50" fill="#4abf90"/><rect x="2766.63" y="357.25" width="44" height="2.25" fill="#e8334f"/><rect x="2766.63" y="359.50" width="44" height="2.00" fill="#fbb833"/><rect x="2766.63" y="361.50" width="44" height="35.00" fill="#4abf90"/><rect x="2821.67" y="361.00" width="44" height="1.50" fill="#e8334f"/><rect x="2821.67" y="362.50" width="44" height="1.25" fill="#fbb833"/><rect x="2821.67" y="363.75" width="44" height="32.75" fill="#4abf90"/><rect x="2876.71" y="361.00" width="44" height="1.00" fill="#e8334f"/><rect x="2876.71" y="362.00" width="44" height="3.00" fill="#fbb833"/><rect x="2876.71" y="365.00" width="44" height="31.50" fill="#4abf90"/><rect x="2931.75" y="360.75" width="44" height="2.00" fill="#e8334f"/><rect x="2931.75" y="362.75" width="44" height="2.25" fill="#fbb833"/><rect x="2931.75" y="365.00" width="44" height="31.50" fill="#4abf90"/><rect x="2986.79" y="359.00" width="44" height="2.75" fill="#e8334f"/><rect x="2986.79" y="361.75" width="44" height="2.25" fill="#fbb833"/><rect x="2986.79" y="364.00" width="44" height="32.50" fill="#4abf90"/><rect x="3041.83" y="360.00" width="44" height="1.75" fill="#e8334f"/><rect x="3041.83" y="361.75" width="44" height="1.00" fill="#fbb833"/><rect x="3041.83" y="362.75" width="44" height="33.75" fill="#4abf90"/><rect x="3096.87" y="325.00" width="44" height="2.00" fill="#e8334f"/><rect x="3096.87" y="327.00" width="44" height="4.00" fill="#fbb833"/><rect x="3096.87" y="331.00" width="44" height="65.50" fill="#4abf90"/><rect x="3151.91" y="329.25" width="44" height="3.75" fill="#e8334f"/><rect x="3151.91" y="333.00" width="44" height="4.50" fill="#fbb833"/><rect x="3151.91" y="337.50" width="44" height="59.00" fill="#4abf90"/><rect x="3206.95" y="323.75" width="44" height="4.00" fill="#e8334f"/><rect x="3206.95" y="327.75" width="44" height="6.25" fill="#fbb833"/><rect x="3206.95" y="334.00" width="44" height="62.50" fill="#4abf90"/><rect x="3261.99" y="323.25" width="44" height="4.50" fill="#e8334f"/><rect x="3261.99" y="327.75" width="44" height="4.25" fill="#fbb833"/><rect x="3261.99" y="332.00" width="44" height="64.50" fill="#4abf90"/><rect x="3317.03" y="327.00" width="44" height="2.00" fill="#e8334f"/><rect x="3317.03" y="329.00" width="44" height="7.00" fill="#fbb833"/><rect x="3317.03" y="336.00" width="44" height="60.50" fill="#4abf90"/><rect x="3372.07" y="325.50" width="44" height="2.50" fill="#e8334f"/><rect x="3372.07" y="328.00" width="44" height="4.50" fill="#fbb833"/><rect x="3372.07" y="332.50" width="44" height="64.00" fill="#4abf90"/><rect x="3427.11" y="319.00" width="44" height="3.75" fill="#e8334f"/><rect x="3427.11" y="322.75" width="44" height="4.00" fill="#fbb833"/><rect x="3427.11" y="326.75" width="44" height="69.75" fill="#4abf90"/><rect x="3482.15" y="322.75" width="44" height="2.00" fill="#e8334f"/><rect x="3482.15" y="324.75" width="44" height="5.25" fill="#fbb833"/><rect x="3482.15" y="330.00" width="44" height="66.50" fill="#4abf90"/><rect x="3537.19" y="321.00" width="44" height="3.50" fill="#e8334f"/><rect x="3537.19" y="324.50" width="44" height="5.50" fill="#fbb833"/><rect x="3537.19" y="330.00" width="44" height="66.50" fill="#4abf90"/><rect x="3592.23" y="324.50" width="44" height="4.25" fill="#e8334f"/><rect x="3592.23" y="328.75" width="44" height="5.25" fill="#fbb833"/><rect x="3592.23" y="334.00" width="44" height="62.50" fill="#4abf90"/><rect x="3647.27" y="323.25" width="44" height="3.25" fill="#e8334f"/><rect x="3647.27" y="326.50" width="44" height="6.25" fill="#fbb833"/><rect x="3647.27" y="332.75" width="44" height="63.75" fill="#4abf90"/><rect x="3702.31" y="324.75" width="44" height="1.75" fill="#e8334f"/><rect x="3702.31" y="326.50" width="44" height="7.25" fill="#fbb833"/><rect x="3702.31" y="333.75" width="44" height="62.75" fill="#4abf90"/><rect x="3757.35" y="326.75" width="44" height="2.25" fill="#e8334f"/><rect x="3757.35" y="329.00" width="44" height="4.50" fill="#fbb833"/><rect x="3757.35" y="333.50" width="44" height="63.00" fill="#4abf90"/></svg>
<div class="t" style="left:1070.00px;top:499.11px;font-size:24px;line-height:24px;color:#a6a7ab;font-weight:400;font-family:'Liberation Mono', monospace;-webkit-text-stroke:0.35px;">Timestamp (Local)</div>
<svg class="i" style="left:0;top:0" width="3808" height="540" viewBox="0 0 3808 540"><circle cx="1387.00" cy="502.50" r="2" fill="#a6a7ab"/><circle cx="1387.00" cy="509.00" r="2" fill="#a6a7ab"/><circle cx="1387.00" cy="515.50" r="2" fill="#a6a7ab"/><circle cx="1393.50" cy="502.50" r="2" fill="#a6a7ab"/><circle cx="1393.50" cy="509.00" r="2" fill="#a6a7ab"/><circle cx="1393.50" cy="515.50" r="2" fill="#a6a7ab"/><circle cx="1707.00" cy="502.50" r="2" fill="#a6a7ab"/><circle cx="1707.00" cy="509.00" r="2" fill="#a6a7ab"/><circle cx="1707.00" cy="515.50" r="2" fill="#a6a7ab"/><circle cx="1713.50" cy="502.50" r="2" fill="#a6a7ab"/><circle cx="1713.50" cy="509.00" r="2" fill="#a6a7ab"/><circle cx="1713.50" cy="515.50" r="2" fill="#a6a7ab"/><circle cx="1937.00" cy="502.50" r="2" fill="#a6a7ab"/><circle cx="1937.00" cy="509.00" r="2" fill="#a6a7ab"/><circle cx="1937.00" cy="515.50" r="2" fill="#a6a7ab"/><circle cx="1943.50" cy="502.50" r="2" fill="#a6a7ab"/><circle cx="1943.50" cy="509.00" r="2" fill="#a6a7ab"/><circle cx="1943.50" cy="515.50" r="2" fill="#a6a7ab"/></svg>
<div class="t" style="left:1410.00px;top:499.11px;font-size:24px;line-height:24px;color:#a6a7ab;font-weight:400;font-family:'Liberation Mono', monospace;-webkit-text-stroke:0.35px;">ServiceName</div>
<div class="t" style="left:1730.00px;top:499.11px;font-size:24px;line-height:24px;color:#a6a7ab;font-weight:400;font-family:'Liberation Mono', monospace;-webkit-text-stroke:0.35px;">SeverityText</div>
<div class="t" style="left:1960.00px;top:499.11px;font-size:24px;line-height:24px;color:#a6a7ab;font-weight:400;font-family:'Liberation Mono', monospace;-webkit-text-stroke:0.35px;">Body</div>
<svg class="i" style="left:3662.65px;top:488.45px" width="30.50" height="30.50" viewBox="0 0 24 24" fill="none" stroke="#c1c2c5" stroke-width="2" stroke-linecap="round" stroke-linejoin="round"><path d="M7 8l-4 4l4 4 M17 8l4 4l-4 4 M14 4l-4 16"/></svg>
<svg class="i" style="left:3710.75px;top:490.25px" width="30.50" height="30.50" viewBox="0 0 24 24" fill="none" stroke="#c1c2c5" stroke-width="2" stroke-linecap="round" stroke-linejoin="round"><path d="M4 6l16 0 M4 18l5 0 M4 12h13a3 3 0 0 1 0 6h-4l2 -2m0 4l-2 -2"/></svg>
<svg class="i" style="left:3758.50px;top:489.25px" width="30.50" height="30.50" viewBox="0 0 24 24" fill="none" stroke="#c1c2c5" stroke-width="2" stroke-linecap="round" stroke-linejoin="round"><path d="M4 17v2a2 2 0 0 0 2 2h12a2 2 0 0 0 2 -2v-2 M7 11l5 5l5 -5 M12 4l0 12"/></svg>
<div class="t" style="left:1072.00px;top:549.01px;font-size:24px;line-height:24px;color:#909296;font-weight:400;font-family:'Liberation Mono', monospace;-webkit-text-stroke:0.35px;">Mar 9 3:13:49.731 PM</div>
<div class="t" style="left:1411.50px;top:549.01px;font-size:24px;line-height:24px;color:#c1c2c5;font-weight:400;font-family:'Liberation Mono', monospace;-webkit-text-stroke:0.35px;">mongodb-demo</div>
<div class="t" style="left:1733.50px;top:549.01px;font-size:24px;line-height:24px;color:#909296;font-weight:400;font-family:'Liberation Mono', monospace;-webkit-text-stroke:0.35px;">info</div>
<div class="t" style="left:1962.00px;top:549.01px;font-size:24px;line-height:24px;color:#c1c2c5;font-weight:400;font-family:'Liberation Mono', monospace;-webkit-text-stroke:0.35px;">Heartbeat sent</div>
<div class="t" style="left:1072.00px;top:594.17px;font-size:24px;line-height:24px;color:#909296;font-weight:400;font-family:'Liberation Mono', monospace;-webkit-text-stroke:0.35px;">Mar 9 3:13:49.731 PM</div>
<div class="t" style="left:1411.50px;top:594.17px;font-size:24px;line-height:24px;color:#c1c2c5;font-weight:400;font-family:'Liberation Mono', monospace;-webkit-text-stroke:0.35px;">mongodb-demo</div>
<div class="t" style="left:1733.50px;top:594.17px;font-size:24px;line-height:24px;color:#909296;font-weight:400;font-family:'Liberation Mono', monospace;-webkit-text-stroke:0.35px;">info</div>
<div class="t" style="left:1962.00px;top:594.17px;font-size:24px;line-height:24px;color:#c1c2c5;font-weight:400;font-family:'Liberation Mono', monospace;-webkit-text-stroke:0.35px;">Heartbeat sent</div>
<div class="t" style="left:1072.00px;top:639.33px;font-size:24px;line-height:24px;color:#909296;font-weight:400;font-family:'Liberation Mono', monospace;-webkit-text-stroke:0.35px;">Mar 9 3:13:44.110 PM</div>
<div class="t" style="left:1411.50px;top:639.33px;font-size:24px;line-height:24px;color:#c1c2c5;font-weight:400;font-family:'Liberation Mono', monospace;-webkit-text-stroke:0.35px;">mongodb-demo</div>
<div class="t" style="left:1733.50px;top:639.33px;font-size:24px;line-height:24px;color:#909296;font-weight:400;font-family:'Liberation Mono', monospace;-webkit-text-stroke:0.35px;">info</div>
<div class="t" style="left:1962.00px;top:639.33px;font-size:24px;line-height:24px;color:#c1c2c5;font-weight:400;font-family:'Liberation Mono', monospace;-webkit-text-stroke:0.35px;">Heartbeat sent</div>
<div class="t" style="left:1072.00px;top:684.49px;font-size:24px;line-height:24px;color:#909296;font-weight:400;font-family:'Liberation Mono', monospace;-webkit-text-stroke:0.35px;">Mar 9 3:13:44.110 PM</div>
<div class="t" style="left:1411.50px;top:684.49px;font-size:24px;line-height:24px;color:#c1c2c5;font-weight:400;font-family:'Liberation Mono', monospace;-webkit-text-stroke:0.35px;">mongodb-demo</div>
<div class="t" style="left:1733.50px;top:684.49px;font-size:24px;line-height:24px;color:#909296;font-weight:400;font-family:'Liberation Mono', monospace;-webkit-text-stroke:0.35px;">info</div>
<div class="t" style="left:1962.00px;top:684.49px;font-size:24px;line-height:24px;color:#c1c2c5;font-weight:400;font-family:'Liberation Mono', monospace;-webkit-text-stroke:0.35px;">Heartbeat sent</div>
<div class="t" style="left:1072.00px;top:729.65px;font-size:24px;line-height:24px;color:#909296;font-weight:400;font-family:'Liberation Mono', monospace;-webkit-text-stroke:0.35px;">Mar 9 3:13:39.143 PM</div>
<div class="t" style="left:1411.50px;top:729.65px;font-size:24px;line-height:24px;color:#c1c2c5;font-weight:400;font-family:'Liberation Mono', monospace;-webkit-text-stroke:0.35px;">mongodb-demo</div>
<div class="t" style="left:1733.50px;top:729.65px;font-size:24px;line-height:24px;color:#909296;font-weight:400;font-family:'Liberation Mono', monospace;-webkit-text-stroke:0.35px;">info</div>
<div class="t" style="left:1962.00px;top:729.65px;font-size:24px;line-height:24px;color:#c1c2c5;font-weight:400;font-family:'Liberation Mono', monospace;-webkit-text-stroke:0.35px;">Heartbeat sent</div>
<div class="t" style="left:1072.00px;top:774.81px;font-size:24px;line-height:24px;color:#909296;font-weight:400;font-family:'Liberation Mono', monospace;-webkit-text-stroke:0.35px;">Mar 9 3:13:39.143 PM</div>
<div class="t" style="left:1411.50px;top:774.81px;font-size:24px;line-height:24px;color:#c1c2c5;font-weight:400;font-family:'Liberation Mono', monospace;-webkit-text-stroke:0.35px;">mongodb-demo</div>
<div class="t" style="left:1733.50px;top:774.81px;font-size:24px;line-height:24px;color:#909296;font-weight:400;font-family:'Liberation Mono', monospace;-webkit-text-stroke:0.35px;">info</div>
<div class="t" style="left:1962.00px;top:774.81px;font-size:24px;line-height:24px;color:#c1c2c5;font-weight:400;font-family:'Liberation Mono', monospace;-webkit-text-stroke:0.35px;">Heartbeat sent</div>
<div class="t" style="left:1072.00px;top:819.97px;font-size:24px;line-height:24px;color:#909296;font-weight:400;font-family:'Liberation Mono', monospace;-webkit-text-stroke:0.35px;">Mar 9 3:13:28.660 PM</div>
<div class="t" style="left:1411.50px;top:819.97px;font-size:24px;line-height:24px;color:#c1c2c5;font-weight:400;font-family:'Liberation Mono', monospace;-webkit-text-stroke:0.35px;">mongodb-demo</div>
<div class="t" style="left:1733.50px;top:819.97px;font-size:24px;line-height:24px;color:#909296;font-weight:400;font-family:'Liberation Mono', monospace;-webkit-text-stroke:0.35px;">info</div>
<div class="t" style="left:1962.00px;top:819.97px;font-size:24px;line-height:24px;color:#c1c2c5;font-weight:400;font-family:'Liberation Mono', monospace;-webkit-text-stroke:0.35px;">command completed</div>
<div class="t" style="left:1072.00px;top:865.13px;font-size:24px;line-height:24px;color:#909296;font-weight:400;font-family:'Liberation Mono', monospace;-webkit-text-stroke:0.35px;">Mar 9 3:13:28.660 PM</div>
<div class="t" style="left:1411.50px;top:865.13px;font-size:24px;line-height:24px;color:#c1c2c5;font-weight:400;font-family:'Liberation Mono', monospace;-webkit-text-stroke:0.35px;">mongodb-demo</div>
<div class="t" style="left:1733.50px;top:865.13px;font-size:24px;line-height:24px;color:#909296;font-weight:400;font-family:'Liberation Mono', monospace;-webkit-text-stroke:0.35px;">info</div>
<div class="t" style="left:1962.00px;top:865.13px;font-size:24px;line-height:24px;color:#c1c2c5;font-weight:400;font-family:'Liberation Mono', monospace;-webkit-text-stroke:0.35px;">command completed</div>
<div class="t" style="left:1072.00px;top:910.29px;font-size:24px;line-height:24px;color:#909296;font-weight:400;font-family:'Liberation Mono', monospace;-webkit-text-stroke:0.35px;">Mar 9 3:13:20.223 PM</div>
<div class="t" style="left:1411.50px;top:910.29px;font-size:24px;line-height:24px;color:#c1c2c5;font-weight:400;font-family:'Liberation Mono', monospace;-webkit-text-stroke:0.35px;">mongodb-demo</div>
<div class="t" style="left:1733.50px;top:910.29px;font-size:24px;line-height:24px;color:#909296;font-weight:400;font-family:'Liberation Mono', monospace;-webkit-text-stroke:0.35px;">info</div>
<div class="t" style="left:1962.00px;top:910.29px;font-size:24px;line-height:24px;color:#c1c2c5;font-weight:400;font-family:'Liberation Mono', monospace;-webkit-text-stroke:0.35px;">command completed</div>
<div class="t" style="left:1072.00px;top:955.45px;font-size:24px;line-height:24px;color:#909296;font-weight:400;font-family:'Liberation Mono', monospace;-webkit-text-stroke:0.35px;">Mar 9 3:13:20.223 PM</div>
<div class="t" style="left:1411.50px;top:955.45px;font-size:24px;line-height:24px;color:#c1c2c5;font-weight:400;font-family:'Liberation Mono', monospace;-webkit-text-stroke:0.35px;">mongodb-demo</div>
<div class="t" style="left:1733.50px;top:955.45px;font-size:24px;line-height:24px;color:#909296;font-weight:400;font-family:'Liberation Mono', monospace;-webkit-text-stroke:0.35px;">info</div>
<div class="t" style="left:1962.00px;top:955.45px;font-size:24px;line-height:24px;color:#c1c2c5;font-weight:400;font-family:'Liberation Mono', monospace;-webkit-text-stroke:0.35px;">command completed</div>
<div class="t" style="left:1072.00px;top:1000.61px;font-size:24px;line-height:24px;color:#909296;font-weight:400;font-family:'Liberation Mono', monospace;-webkit-text-stroke:0.35px;">Mar 9 3:13:08.440 PM</div>
<div class="t" style="left:1411.50px;top:1000.61px;font-size:24px;line-height:24px;color:#c1c2c5;font-weight:400;font-family:'Liberation Mono', monospace;-webkit-text-stroke:0.35px;">mongodb-demo</div>
<div class="t" style="left:1733.50px;top:1000.61px;font-size:24px;line-height:24px;color:#909296;font-weight:400;font-family:'Liberation Mono', monospace;-webkit-text-stroke:0.35px;">info</div>
<div class="t" style="left:1962.00px;top:1000.61px;font-size:24px;line-height:24px;color:#c1c2c5;font-weight:400;font-family:'Liberation Mono', monospace;-webkit-text-stroke:0.35px;">Heartbeat sent</div>
<div class="t" style="left:1072.00px;top:1045.77px;font-size:24px;line-height:24px;color:#909296;font-weight:400;font-family:'Liberation Mono', monospace;-webkit-text-stroke:0.35px;">Mar 9 3:13:08.440 PM</div>
<div class="t" style="left:1411.50px;top:1045.77px;font-size:24px;line-height:24px;color:#c1c2c5;font-weight:400;font-family:'Liberation Mono', monospace;-webkit-text-stroke:0.35px;">mongodb-demo</div>
<div class="t" style="left:1733.50px;top:1045.77px;font-size:24px;line-height:24px;color:#909296;font-weight:400;font-family:'Liberation Mono', monospace;-webkit-text-stroke:0.35px;">info</div>
<div class="t" style="left:1962.00px;top:1045.77px;font-size:24px;line-height:24px;color:#c1c2c5;font-weight:400;font-family:'Liberation Mono', monospace;-webkit-text-stroke:0.35px;">Heartbeat sent</div>
<div class="t" style="left:1072.00px;top:1090.93px;font-size:24px;line-height:24px;color:#909296;font-weight:400;font-family:'Liberation Mono', monospace;-webkit-text-stroke:0.35px;">Mar 9 3:12:55.215 PM</div>
<div class="t" style="left:1411.50px;top:1090.93px;font-size:24px;line-height:24px;color:#c1c2c5;font-weight:400;font-family:'Liberation Mono', monospace;-webkit-text-stroke:0.35px;">mongodb-demo</div>
<div class="t" style="left:1733.50px;top:1090.93px;font-size:24px;line-height:24px;color:#909296;font-weight:400;font-family:'Liberation Mono', monospace;-webkit-text-stroke:0.35px;">info</div>
<div class="t" style="left:1962.00px;top:1090.93px;font-size:24px;line-height:24px;color:#c1c2c5;font-weight:400;font-family:'Liberation Mono', monospace;-webkit-text-stroke:0.35px;">command completed</div>
<div class="t" style="left:1072.00px;top:1136.09px;font-size:24px;line-height:24px;color:#909296;font-weight:400;font-family:'Liberation Mono', monospace;-webkit-text-stroke:0.35px;">Mar 9 3:12:55.215 PM</div>
<div class="t" style="left:1411.50px;top:1136.09px;font-size:24px;line-height:24px;color:#c1c2c5;font-weight:400;font-family:'Liberation Mono', monospace;-webkit-text-stroke:0.35px;">mongodb-demo</div>
<div class="t" style="left:1733.50px;top:1136.09px;font-size:24px;line-height:24px;color:#909296;font-weight:400;font-family:'Liberation Mono', monospace;-webkit-text-stroke:0.35px;">info</div>
<div class="t" style="left:1962.00px;top:1136.09px;font-size:24px;line-height:24px;color:#c1c2c5;font-weight:400;font-family:'Liberation Mono', monospace;-webkit-text-stroke:0.35px;">command completed</div>
<div class="t" style="left:1072.00px;top:1181.25px;font-size:24px;line-height:24px;color:#909296;font-weight:400;font-family:'Liberation Mono', monospace;-webkit-text-stroke:0.35px;">Mar 9 3:12:44.506 PM</div>
<div class="t" style="left:1411.50px;top:1181.25px;font-size:24px;line-height:24px;color:#c1c2c5;font-weight:400;font-family:'Liberation Mono', monospace;-webkit-text-stroke:0.35px;">mongodb-demo</div>
<div class="t" style="left:1733.50px;top:1181.25px;font-size:24px;line-height:24px;color:#909296;font-weight:400;font-family:'Liberation Mono', monospace;-webkit-text-stroke:0.35px;">info</div>
<div class="t" style="left:1962.00px;top:1181.25px;font-size:24px;line-height:24px;color:#c1c2c5;font-weight:400;font-family:'Liberation Mono', monospace;-webkit-text-stroke:0.35px;">end connection</div>
<div class="t" style="left:1072.00px;top:1226.41px;font-size:24px;line-height:24px;color:#909296;font-weight:400;font-family:'Liberation Mono', monospace;-webkit-text-stroke:0.35px;">Mar 9 3:12:44.506 PM</div>
<div class="t" style="left:1411.50px;top:1226.41px;font-size:24px;line-height:24px;color:#c1c2c5;font-weight:400;font-family:'Liberation Mono', monospace;-webkit-text-stroke:0.35px;">mongodb-demo</div>
<div class="t" style="left:1733.50px;top:1226.41px;font-size:24px;line-height:24px;color:#909296;font-weight:400;font-family:'Liberation Mono', monospace;-webkit-text-stroke:0.35px;">info</div>
<div class="t" style="left:1962.00px;top:1226.41px;font-size:24px;line-height:24px;color:#c1c2c5;font-weight:400;font-family:'Liberation Mono', monospace;-webkit-text-stroke:0.35px;">end connection</div>
<div class="t" style="left:1072.00px;top:1271.57px;font-size:24px;line-height:24px;color:#909296;font-weight:400;font-family:'Liberation Mono', monospace;-webkit-text-stroke:0.35px;">Mar 9 3:12:44.299 PM</div>
<div class="t" style="left:1411.50px;top:1271.57px;font-size:24px;line-height:24px;color:#c1c2c5;font-weight:400;font-family:'Liberation Mono', monospace;-webkit-text-stroke:0.35px;">mongodb-demo</div>
<div class="t" style="left:1733.50px;top:1271.57px;font-size:24px;line-height:24px;color:#909296;font-weight:400;font-family:'Liberation Mono', monospace;-webkit-text-stroke:0.35px;">info</div>
<div class="t" style="left:1962.00px;top:1271.57px;font-size:24px;line-height:24px;color:#c1c2c5;font-weight:400;font-family:'Liberation Mono', monospace;-webkit-text-stroke:0.35px;">Server status collected</div>
<div class="t" style="left:1072.00px;top:1316.73px;font-size:24px;line-height:24px;color:#909296;font-weight:400;font-family:'Liberation Mono', monospace;-webkit-text-stroke:0.35px;">Mar 9 3:12:44.299 PM</div>
<div class="t" style="left:1411.50px;top:1316.73px;font-size:24px;line-height:24px;color:#c1c2c5;font-weight:400;font-family:'Liberation Mono', monospace;-webkit-text-stroke:0.35px;">mongodb-demo</div>
<div class="t" style="left:1733.50px;top:1316.73px;font-size:24px;line-height:24px;color:#909296;font-weight:400;font-family:'Liberation Mono', monospace;-webkit-text-stroke:0.35px;">info</div>
<div class="t" style="left:1962.00px;top:1316.73px;font-size:24px;line-height:24px;color:#c1c2c5;font-weight:400;font-family:'Liberation Mono', monospace;-webkit-text-stroke:0.35px;">Server status collected</div>
<div class="t" style="left:1072.00px;top:1361.89px;font-size:24px;line-height:24px;color:#909296;font-weight:400;font-family:'Liberation Mono', monospace;-webkit-text-stroke:0.35px;">Mar 9 3:12:33.175 PM</div>
<div class="t" style="left:1411.50px;top:1361.89px;font-size:24px;line-height:24px;color:#c1c2c5;font-weight:400;font-family:'Liberation Mono', monospace;-webkit-text-stroke:0.35px;">mongodb-demo</div>
<div class="t" style="left:1733.50px;top:1361.89px;font-size:24px;line-height:24px;color:#909296;font-weight:400;font-family:'Liberation Mono', monospace;-webkit-text-stroke:0.35px;">info</div>
<div class="t" style="left:1962.00px;top:1361.89px;font-size:24px;line-height:24px;color:#c1c2c5;font-weight:400;font-family:'Liberation Mono', monospace;-webkit-text-stroke:0.35px;">command completed</div>
<div class="t" style="left:1072.00px;top:1407.05px;font-size:24px;line-height:24px;color:#909296;font-weight:400;font-family:'Liberation Mono', monospace;-webkit-text-stroke:0.35px;">Mar 9 3:12:33.175 PM</div>
<div class="t" style="left:1411.50px;top:1407.05px;font-size:24px;line-height:24px;color:#c1c2c5;font-weight:400;font-family:'Liberation Mono', monospace;-webkit-text-stroke:0.35px;">mongodb-demo</div>
<div class="t" style="left:1733.50px;top:1407.05px;font-size:24px;line-height:24px;color:#909296;font-weight:400;font-family:'Liberation Mono', monospace;-webkit-text-stroke:0.35px;">info</div>
<div class="t" style="left:1962.00px;top:1407.05px;font-size:24px;line-height:24px;color:#c1c2c5;font-weight:400;font-family:'Liberation Mono', monospace;-webkit-text-stroke:0.35px;">command completed</div>
<div class="t" style="left:1072.00px;top:1452.21px;font-size:24px;line-height:24px;color:#909296;font-weight:400;font-family:'Liberation Mono', monospace;-webkit-text-stroke:0.35px;">Mar 9 3:12:19.258 PM</div>
<div class="t" style="left:1411.50px;top:1452.21px;font-size:24px;line-height:24px;color:#c1c2c5;font-weight:400;font-family:'Liberation Mono', monospace;-webkit-text-stroke:0.35px;">mongodb-demo</div>
<div class="t" style="left:1733.50px;top:1452.21px;font-size:24px;line-height:24px;color:#f27a7a;font-weight:400;font-family:'Liberation Mono', monospace;-webkit-text-stroke:0.35px;">error</div>
<div class="t" style="left:1962.00px;top:1452.21px;font-size:24px;line-height:24px;color:#c1c2c5;font-weight:400;font-family:'Liberation Mono', monospace;-webkit-text-stroke:0.35px;">Command failed</div>
<div class="t" style="left:1072.00px;top:1497.37px;font-size:24px;line-height:24px;color:#909296;font-weight:400;font-family:'Liberation Mono', monospace;-webkit-text-stroke:0.35px;">Mar 9 3:12:19.258 PM</div>
<div class="t" style="left:1411.50px;top:1497.37px;font-size:24px;line-height:24px;color:#c1c2c5;font-weight:400;font-family:'Liberation Mono', monospace;-webkit-text-stroke:0.35px;">mongodb-demo</div>
<div class="t" style="left:1733.50px;top:1497.37px;font-size:24px;line-height:24px;color:#f27a7a;font-weight:400;font-family:'Liberation Mono', monospace;-webkit-text-stroke:0.35px;">error</div>
<div class="t" style="left:1962.00px;top:1497.37px;font-size:24px;line-height:24px;color:#c1c2c5;font-weight:400;font-family:'Liberation Mono', monospace;-webkit-text-stroke:0.35px;">Command failed</div>
<div class="t" style="left:1072.00px;top:1542.53px;font-size:24px;line-height:24px;color:#909296;font-weight:400;font-family:'Liberation Mono', monospace;-webkit-text-stroke:0.35px;">Mar 9 3:12:16.637 PM</div>
<div class="t" style="left:1411.50px;top:1542.53px;font-size:24px;line-height:24px;color:#c1c2c5;font-weight:400;font-family:'Liberation Mono', monospace;-webkit-text-stroke:0.35px;">mongodb-demo</div>
<div class="t" style="left:1733.50px;top:1542.53px;font-size:24px;line-height:24px;color:#909296;font-weight:400;font-family:'Liberation Mono', monospace;-webkit-text-stroke:0.35px;">info</div>
<div class="t" style="left:1962.00px;top:1542.53px;font-size:24px;line-height:24px;color:#c1c2c5;font-weight:400;font-family:'Liberation Mono', monospace;-webkit-text-stroke:0.35px;">command completed</div>
<div class="t" style="left:1072.00px;top:1587.69px;font-size:24px;line-height:24px;color:#909296;font-weight:400;font-family:'Liberation Mono', monospace;-webkit-text-stroke:0.35px;">Mar 9 3:12:16.637 PM</div>
<div class="t" style="left:1411.50px;top:1587.69px;font-size:24px;line-height:24px;color:#c1c2c5;font-weight:400;font-family:'Liberation Mono', monospace;-webkit-text-stroke:0.35px;">mongodb-demo</div>
<div class="t" style="left:1733.50px;top:1587.69px;font-size:24px;line-height:24px;color:#909296;font-weight:400;font-family:'Liberation Mono', monospace;-webkit-text-stroke:0.35px;">info</div>
<div class="t" style="left:1962.00px;top:1587.69px;font-size:24px;line-height:24px;color:#c1c2c5;font-weight:400;font-family:'Liberation Mono', monospace;-webkit-text-stroke:0.35px;">command completed</div>
<div class="t" style="left:1072.00px;top:1632.85px;font-size:24px;line-height:24px;color:#909296;font-weight:400;font-family:'Liberation Mono', monospace;-webkit-text-stroke:0.35px;">Mar 9 3:12:06.491 PM</div>
<div class="t" style="left:1411.50px;top:1632.85px;font-size:24px;line-height:24px;color:#c1c2c5;font-weight:400;font-family:'Liberation Mono', monospace;-webkit-text-stroke:0.35px;">mongodb-demo</div>
<div class="t" style="left:1733.50px;top:1632.85px;font-size:24px;line-height:24px;color:#909296;font-weight:400;font-family:'Liberation Mono', monospace;-webkit-text-stroke:0.35px;">info</div>
<div class="t" style="left:1962.00px;top:1632.85px;font-size:24px;line-height:24px;color:#c1c2c5;font-weight:400;font-family:'Liberation Mono', monospace;-webkit-text-stroke:0.35px;">Replica set status</div>
<div class="t" style="left:1072.00px;top:1678.01px;font-size:24px;line-height:24px;color:#909296;font-weight:400;font-family:'Liberation Mono', monospace;-webkit-text-stroke:0.35px;">Mar 9 3:12:06.491 PM</div>
<div class="t" style="left:1411.50px;top:1678.01px;font-size:24px;line-height:24px;color:#c1c2c5;font-weight:400;font-family:'Liberation Mono', monospace;-webkit-text-stroke:0.35px;">mongodb-demo</div>
<div class="t" style="left:1733.50px;top:1678.01px;font-size:24px;line-height:24px;color:#909296;font-weight:400;font-family:'Liberation Mono', monospace;-webkit-text-stroke:0.35px;">info</div>
<div class="t" style="left:1962.00px;top:1678.01px;font-size:24px;line-height:24px;color:#c1c2c5;font-weight:400;font-family:'Liberation Mono', monospace;-webkit-text-stroke:0.35px;">Replica set status</div>
<div class="t" style="left:1072.00px;top:1723.17px;font-size:24px;line-height:24px;color:#909296;font-weight:400;font-family:'Liberation Mono', monospace;-webkit-text-stroke:0.35px;">Mar 9 3:12:01.797 PM</div>
<div class="t" style="left:1411.50px;top:1723.17px;font-size:24px;line-height:24px;color:#c1c2c5;font-weight:400;font-family:'Liberation Mono', monospace;-webkit-text-stroke:0.35px;">mongodb-demo</div>
<div class="t" style="left:1733.50px;top:1723.17px;font-size:24px;line-height:24px;color:#fad250;font-weight:400;font-family:'Liberation Mono', monospace;-webkit-text-stroke:0.35px;">warn</div>
<div class="t" style="left:1962.00px;top:1723.17px;font-size:24px;line-height:24px;color:#c1c2c5;font-weight:400;font-family:'Liberation Mono', monospace;-webkit-text-stroke:0.35px;">Cache usage approaching limit</div>
<div class="t" style="left:1072.00px;top:1768.33px;font-size:24px;line-height:24px;color:#909296;font-weight:400;font-family:'Liberation Mono', monospace;-webkit-text-stroke:0.35px;">Mar 9 3:12:01.797 PM</div>
<div class="t" style="left:1411.50px;top:1768.33px;font-size:24px;line-height:24px;color:#c1c2c5;font-weight:400;font-family:'Liberation Mono', monospace;-webkit-text-stroke:0.35px;">mongodb-demo</div>
<div class="t" style="left:1733.50px;top:1768.33px;font-size:24px;line-height:24px;color:#fad250;font-weight:400;font-family:'Liberation Mono', monospace;-webkit-text-stroke:0.35px;">warn</div>
<div class="t" style="left:1962.00px;top:1768.33px;font-size:24px;line-height:24px;color:#c1c2c5;font-weight:400;font-family:'Liberation Mono', monospace;-webkit-text-stroke:0.35px;">Cache usage approaching limit</div>
<div class="t" style="left:1072.00px;top:1813.49px;font-size:24px;line-height:24px;color:#909296;font-weight:400;font-family:'Liberation Mono', monospace;-webkit-text-stroke:0.35px;">Mar 9 3:11:49.769 PM</div>
<div class="t" style="left:1411.50px;top:1813.49px;font-size:24px;line-height:24px;color:#c1c2c5;font-weight:400;font-family:'Liberation Mono', monospace;-webkit-text-stroke:0.35px;">mongodb-demo</div>
<div class="t" style="left:1733.50px;top:1813.49px;font-size:24px;line-height:24px;color:#909296;font-weight:400;font-family:'Liberation Mono', monospace;-webkit-text-stroke:0.35px;">info</div>
<div class="t" style="left:1962.00px;top:1813.49px;font-size:24px;line-height:24px;color:#c1c2c5;font-weight:400;font-family:'Liberation Mono', monospace;-webkit-text-stroke:0.35px;">command completed</div>
<div class="t" style="left:1072.00px;top:1858.65px;font-size:24px;line-height:24px;color:#909296;font-weight:400;font-family:'Liberation Mono', monospace;-webkit-text-stroke:0.35px;">Mar 9 3:11:49.769 PM</div>
<div class="t" style="left:1411.50px;top:1858.65px;font-size:24px;line-height:24px;color:#c1c2c5;font-weight:400;font-family:'Liberation Mono', monospace;-webkit-text-stroke:0.35px;">mongodb-demo</div>
<div class="t" style="left:1733.50px;top:1858.65px;font-size:24px;line-height:24px;color:#909296;font-weight:400;font-family:'Liberation Mono', monospace;-webkit-text-stroke:0.35px;">info</div>
<div class="t" style="left:1962.00px;top:1858.65px;font-size:24px;line-height:24px;color:#c1c2c5;font-weight:400;font-family:'Liberation Mono', monospace;-webkit-text-stroke:0.35px;">command completed</div>
<div class="t" style="left:1072.00px;top:1903.81px;font-size:24px;line-height:24px;color:#909296;font-weight:400;font-family:'Liberation Mono', monospace;-webkit-text-stroke:0.35px;">Mar 9 3:11:43.228 PM</div>
<div class="t" style="left:1411.50px;top:1903.81px;font-size:24px;line-height:24px;color:#c1c2c5;font-weight:400;font-family:'Liberation Mono', monospace;-webkit-text-stroke:0.35px;">mongodb-demo</div>
<div class="t" style="left:1733.50px;top:1903.81px;font-size:24px;line-height:24px;color:#909296;font-weight:400;font-family:'Liberation Mono', monospace;-webkit-text-stroke:0.35px;">info</div>
<div class="t" style="left:1962.00px;top:1903.81px;font-size:24px;line-height:24px;color:#c1c2c5;font-weight:400;font-family:'Liberation Mono', monospace;-webkit-text-stroke:0.35px;">Heartbeat sent</div>
<svg class="i" style="left:0;top:0" width="3808" height="1934" viewBox="0 0 3808 1934"><path d="M1023.2 550.70 L1031.2 558.50 L1023.2 566.30" fill="none" stroke="#909296" stroke-width="2.5" stroke-linecap="round" stroke-linejoin="round"/><rect x="1051" y="548.50" width="2" height="20" fill="#2a2c31"/><path d="M1023.2 595.86 L1031.2 603.66 L1023.2 611.46" fill="none" stroke="#909296" stroke-width="2.5" stroke-linecap="round" stroke-linejoin="round"/><rect x="1051" y="593.66" width="2" height="20" fill="#2a2c31"/><path d="M1023.2 641.02 L1031.2 648.82 L1023.2 656.62" fill="none" stroke="#909296" stroke-width="2.5" stroke-linecap="round" stroke-linejoin="round"/><rect x="1051" y="638.82" width="2" height="20" fill="#2a2c31"/><path d="M1023.2 686.18 L1031.2 693.98 L1023.2 701.78" fill="none" stroke="#909296" stroke-width="2.5" stroke-linecap="round" stroke-linejoin="round"/><rect x="1051" y="683.98" width="2" height="20" fill="#2a2c31"/><path d="M1023.2 731.34 L1031.2 739.14 L1023.2 746.94" fill="none" stroke="#909296" stroke-width="2.5" stroke-linecap="round" stroke-linejoin="round"/><rect x="1051" y="729.14" width="2" height="20" fill="#2a2c31"/><path d="M1023.2 776.50 L1031.2 784.30 L1023.2 792.10" fill="none" stroke="#909296" stroke-width="2.5" stroke-linecap="round" stroke-linejoin="round"/><rect x="1051" y="774.30" width="2" height="20" fill="#2a2c31"/><path d="M1023.2 821.66 L1031.2 829.46 L1023.2 837.26" fill="none" stroke="#909296" stroke-width="2.5" stroke-linecap="round" stroke-linejoin="round"/><rect x="1051" y="819.46" width="2" height="20" fill="#2a2c31"/><path d="M1023.2 866.82 L1031.2 874.62 L1023.2 882.42" fill="none" stroke="#909296" stroke-width="2.5" stroke-linecap="round" stroke-linejoin="round"/><rect x="1051" y="864.62" width="2" height="20" fill="#2a2c31"/><path d="M1023.2 911.98 L1031.2 919.78 L1023.2 927.58" fill="none" stroke="#909296" stroke-width="2.5" stroke-linecap="round" stroke-linejoin="round"/><rect x="1051" y="909.78" width="2" height="20" fill="#2a2c31"/><path d="M1023.2 957.14 L1031.2 964.94 L1023.2 972.74" fill="none" stroke="#909296" stroke-width="2.5" stroke-linecap="round" stroke-linejoin="round"/><rect x="1051" y="954.94" width="2" height="20" fill="#2a2c31"/><path d="M1023.2 1002.30 L1031.2 1010.10 L1023.2 1017.90" fill="none" stroke="#909296" stroke-width="2.5" stroke-linecap="round" stroke-linejoin="round"/><rect x="1051" y="1000.10" width="2" height="20" fill="#2a2c31"/><path d="M1023.2 1047.46 L1031.2 1055.26 L1023.2 1063.06" fill="none" stroke="#909296" stroke-width="2.5" stroke-linecap="round" stroke-linejoin="round"/><rect x="1051" y="1045.26" width="2" height="20" fill="#2a2c31"/><path d="M1023.2 1092.62 L1031.2 1100.42 L1023.2 1108.22" fill="none" stroke="#909296" stroke-width="2.5" stroke-linecap="round" stroke-linejoin="round"/><rect x="1051" y="1090.42" width="2" height="20" fill="#2a2c31"/><path d="M1023.2 1137.78 L1031.2 1145.58 L1023.2 1153.38" fill="none" stroke="#909296" stroke-width="2.5" stroke-linecap="round" stroke-linejoin="round"/><rect x="1051" y="1135.58" width="2" height="20" fill="#2a2c31"/><path d="M1023.2 1182.94 L1031.2 1190.74 L1023.2 1198.54" fill="none" stroke="#909296" stroke-width="2.5" stroke-linecap="round" stroke-linejoin="round"/><rect x="1051" y="1180.74" width="2" height="20" fill="#2a2c31"/><path d="M1023.2 1228.10 L1031.2 1235.90 L1023.2 1243.70" fill="none" stroke="#909296" stroke-width="2.5" stroke-linecap="round" stroke-linejoin="round"/><rect x="1051" y="1225.90" width="2" height="20" fill="#2a2c31"/><path d="M1023.2 1273.26 L1031.2 1281.06 L1023.2 1288.86" fill="none" stroke="#909296" stroke-width="2.5" stroke-linecap="round" stroke-linejoin="round"/><rect x="1051" y="1271.06" width="2" height="20" fill="#2a2c31"/><path d="M1023.2 1318.42 L1031.2 1326.22 L1023.2 1334.02" fill="none" stroke="#909296" stroke-width="2.5" stroke-linecap="round" stroke-linejoin="round"/><rect x="1051" y="1316.22" width="2" height="20" fill="#2a2c31"/><path d="M1023.2 1363.58 L1031.2 1371.38 L1023.2 1379.18" fill="none" stroke="#909296" stroke-width="2.5" stroke-linecap="round" stroke-linejoin="round"/><rect x="1051" y="1361.38" width="2" height="20" fill="#2a2c31"/><path d="M1023.2 1408.74 L1031.2 1416.54 L1023.2 1424.34" fill="none" stroke="#909296" stroke-width="2.5" stroke-linecap="round" stroke-linejoin="round"/><rect x="1051" y="1406.54" width="2" height="20" fill="#2a2c31"/><path d="M1023.2 1453.90 L1031.2 1461.70 L1023.2 1469.50" fill="none" stroke="#909296" stroke-width="2.5" stroke-linecap="round" stroke-linejoin="round"/><rect x="1051" y="1451.70" width="2" height="20" fill="#2a2c31"/><path d="M1023.2 1499.06 L1031.2 1506.86 L1023.2 1514.66" fill="none" stroke="#909296" stroke-width="2.5" stroke-linecap="round" stroke-linejoin="round"/><rect x="1051" y="1496.86" width="2" height="20" fill="#2a2c31"/><path d="M1023.2 1544.22 L1031.2 1552.02 L1023.2 1559.82" fill="none" stroke="#909296" stroke-width="2.5" stroke-linecap="round" stroke-linejoin="round"/><rect x="1051" y="1542.02" width="2" height="20" fill="#2a2c31"/><path d="M1023.2 1589.38 L1031.2 1597.18 L1023.2 1604.98" fill="none" stroke="#909296" stroke-width="2.5" stroke-linecap="round" stroke-linejoin="round"/><rect x="1051" y="1587.18" width="2" height="20" fill="#2a2c31"/><path d="M1023.2 1634.54 L1031.2 1642.34 L1023.2 1650.14" fill="none" stroke="#909296" stroke-width="2.5" stroke-linecap="round" stroke-linejoin="round"/><rect x="1051" y="1632.34" width="2" height="20" fill="#2a2c31"/><path d="M1023.2 1679.70 L1031.2 1687.50 L1023.2 1695.30" fill="none" stroke="#909296" stroke-width="2.5" stroke-linecap="round" stroke-linejoin="round"/><rect x="1051" y="1677.50" width="2" height="20" fill="#2a2c31"/><path d="M1023.2 1724.86 L1031.2 1732.66 L1023.2 1740.46" fill="none" stroke="#909296" stroke-width="2.5" stroke-linecap="round" stroke-linejoin="round"/><rect x="1051" y="1722.66" width="2" height="20" fill="#2a2c31"/><path d="M1023.2 1770.02 L1031.2 1777.82 L1023.2 1785.62" fill="none" stroke="#909296" stroke-width="2.5" stroke-linecap="round" stroke-linejoin="round"/><rect x="1051" y="1767.82" width="2" height="20" fill="#2a2c31"/><path d="M1023.2 1815.18 L1031.2 1822.98 L1023.2 1830.78" fill="none" stroke="#909296" stroke-width="2.5" stroke-linecap="round" stroke-linejoin="round"/><rect x="1051" y="1812.98" width="2" height="20" fill="#2a2c31"/><path d="M1023.2 1860.34 L1031.2 1868.14 L1023.2 1875.94" fill="none" stroke="#909296" stroke-width="2.5" stroke-linecap="round" stroke-linejoin="round"/><rect x="1051" y="1858.14" width="2" height="20" fill="#2a2c31"/><path d="M1023.2 1905.50 L1031.2 1913.30 L1023.2 1921.10" fill="none" stroke="#909296" stroke-width="2.5" stroke-linecap="round" stroke-linejoin="round"/><rect x="1051" y="1903.30" width="2" height="20" fill="#2a2c31"/></svg>
<div class="r" style="left:0.00px;top:1932.00px;width:3808.00px;height:2.00px;background:#45474a;border-radius:0px;box-sizing:border-box;"></div>
<svg class="i" style="left:0;top:1890px" width="40" height="44" viewBox="0 1890 40 44"><path d="M0 1911 A22 22 0 0 0 22 1933 L22 1934 L0 1934 Z" fill="#121810"/><path d="M0.5 1913 A21 21 0 0 0 21.5 1933" fill="none" stroke="#45474a" stroke-width="2"/></svg></div></body></html>
